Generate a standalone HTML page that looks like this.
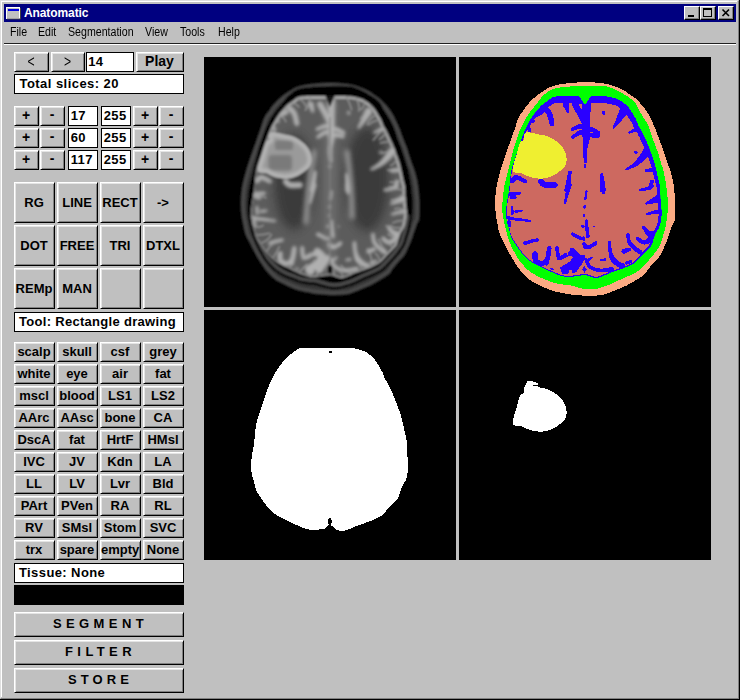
<!DOCTYPE html>
<html><head><meta charset="utf-8"><title>Anatomatic</title>
<style>
html,body{margin:0;padding:0;}
body{width:740px;height:700px;overflow:hidden;background:#c0c0c0;position:relative;font-family:"Liberation Sans",sans-serif;font-size:13px;color:#000;}
.abs{position:absolute;}
#frame{position:absolute;left:0;top:0;width:739px;height:699px;border-right:1px solid #000;border-bottom:1px solid #000;box-sizing:content-box;}
#f1{position:absolute;left:0;top:0;width:739px;height:699px;border-top:1px solid #dfdfdf;border-left:1px solid #dfdfdf;border-right:1px solid #808080;border-bottom:1px solid #808080;box-sizing:border-box;}
#f2{position:absolute;left:1px;top:1px;width:736px;height:696px;border-top:1px solid #fff;border-left:1px solid #fff;box-sizing:border-box;}
#title{position:absolute;left:4px;top:4px;width:732px;height:18px;background:#000080;color:#fff;font-weight:bold;font-size:13px;line-height:18px;}
#title span{position:absolute;left:20px;top:0;font-size:12px;letter-spacing:-0.1px}
.menu{position:absolute;top:25px;font-size:12px;line-height:14px;transform:scaleX(0.885);transform-origin:0 0;}
#sep1{position:absolute;left:4px;top:43px;width:732px;height:1px;background:#202020;}
#sep2{position:absolute;left:4px;top:44px;width:732px;height:1px;background:#fff;}
.btn{position:absolute;box-sizing:border-box;background:#c0c0c0;border-top:1px solid #fff;border-left:1px solid #fff;border-right:1px solid #000;border-bottom:1px solid #000;box-shadow:inset 1px 1px 0 #e4e4e4,inset -1px -1px 0 #808080;padding:1px 0 0 1px;font-weight:bold;text-align:center;white-space:nowrap;overflow:hidden;}
.btn span{position:relative;display:block;left:-1px;}
.box{position:absolute;box-sizing:border-box;background:#fff;border:1px solid #000;font-weight:bold;white-space:nowrap;overflow:hidden;}
.cb{position:absolute;box-sizing:border-box;background:#c0c0c0;border-top:1px solid #fff;border-left:1px solid #fff;border-right:1px solid #000;border-bottom:1px solid #000;}
.cb:after{content:"";position:absolute;right:0;bottom:0;left:0;top:0;border-right:1px solid #808080;border-bottom:1px solid #808080;}
</style></head>
<body>
<div id="frame"></div><div id="f1"></div><div id="f2"></div>
<div id="title"><span>Anatomatic</span></div>

<svg class="abs" style="left:6px;top:5px" width="16" height="16" viewBox="0 0 16 16"><rect x="0.5" y="2.5" width="13" height="11" fill="#c0c0c0" stroke="#fff"/><path d="M1 14H14.5V3" fill="none" stroke="#404040"/><rect x="2" y="4" width="11" height="2" fill="#0000e0"/></svg>
<div class="cb" style="left:684px;top:6px;width:16px;height:14px"><svg class="abs" style="left:0;top:0" width="14" height="12"><rect x="3" y="8" width="6" height="2" fill="#000"/></svg></div>
<div class="cb" style="left:700px;top:6px;width:16px;height:14px"><svg class="abs" style="left:0;top:0" width="14" height="12"><rect x="2.5" y="1.5" width="8" height="8" fill="none" stroke="#000"/><rect x="2" y="1" width="9" height="2" fill="#000"/></svg></div>
<div class="cb" style="left:718px;top:6px;width:16px;height:14px"><svg class="abs" style="left:0;top:0" width="14" height="12"><path d="M3.5 2.5L10 9M10 2.5L3.5 9" stroke="#000" stroke-width="1.6" fill="none"/></svg></div>

<div class="menu" style="left:10.3px">File</div><div class="menu" style="left:38.3px">Edit</div><div class="menu" style="left:67.6px">Segmentation</div><div class="menu" style="left:144.5px">View</div><div class="menu" style="left:179.5px">Tools</div><div class="menu" style="left:217.5px">Help</div>
<div id="sep1"></div><div id="sep2"></div>
<div class="btn" style="left:14px;top:52px;width:35px;height:20px;font-size:17px;line-height:17px;font-weight:normal;"><span style="letter-spacing:0px;top:-1px;transform:scaleX(0.72);">&lt;</span></div>
<div class="btn" style="left:51px;top:52px;width:34px;height:20px;font-size:17px;line-height:17px;font-weight:normal;"><span style="letter-spacing:0px;top:-1px;transform:scaleX(0.72);">&gt;</span></div>
<div class="box" style="left:86px;top:52px;width:48px;height:20px;font-size:13px;line-height:18px;padding-left:1.2px;letter-spacing:0.4px;"><span style="position:relative;top:0px">14</span></div>
<div class="btn" style="left:136px;top:52px;width:48px;height:20px;font-size:14px;line-height:17px;"><span style="letter-spacing:0px;top:-1px;">Play</span></div>
<div class="box" style="left:14px;top:74px;width:170px;height:20px;font-size:13px;line-height:18px;padding-left:4.5px;letter-spacing:0.45px;"><span style="position:relative;top:0px">Total slices: 20</span></div>
<div class="btn" style="left:14px;top:106px;width:25px;height:20px;font-size:14px;line-height:17px;"><span style="letter-spacing:0px;top:-1px;">+</span></div>
<div class="btn" style="left:40px;top:106px;width:25px;height:20px;font-size:14px;line-height:17px;"><span style="letter-spacing:0px;top:-2px;">-</span></div>
<div class="box" style="left:68px;top:106px;width:30px;height:20px;font-size:13px;line-height:18px;padding-left:1.7px;letter-spacing:0.4px;"><span style="position:relative;top:0px">17</span></div>
<div class="box" style="left:101px;top:106px;width:30px;height:20px;font-size:13px;line-height:18px;padding-left:1.7px;letter-spacing:0.4px;"><span style="position:relative;top:0px">255</span></div>
<div class="btn" style="left:133px;top:106px;width:25px;height:20px;font-size:14px;line-height:17px;"><span style="letter-spacing:0px;top:-1px;">+</span></div>
<div class="btn" style="left:159px;top:106px;width:25px;height:20px;font-size:14px;line-height:17px;"><span style="letter-spacing:0px;top:-2px;">-</span></div>
<div class="btn" style="left:14px;top:128px;width:25px;height:20px;font-size:14px;line-height:17px;"><span style="letter-spacing:0px;top:-1px;">+</span></div>
<div class="btn" style="left:40px;top:128px;width:25px;height:20px;font-size:14px;line-height:17px;"><span style="letter-spacing:0px;top:-2px;">-</span></div>
<div class="box" style="left:68px;top:128px;width:30px;height:20px;font-size:13px;line-height:18px;padding-left:1.7px;letter-spacing:0.4px;"><span style="position:relative;top:0px">60</span></div>
<div class="box" style="left:101px;top:128px;width:30px;height:20px;font-size:13px;line-height:18px;padding-left:1.7px;letter-spacing:0.4px;"><span style="position:relative;top:0px">255</span></div>
<div class="btn" style="left:133px;top:128px;width:25px;height:20px;font-size:14px;line-height:17px;"><span style="letter-spacing:0px;top:-1px;">+</span></div>
<div class="btn" style="left:159px;top:128px;width:25px;height:20px;font-size:14px;line-height:17px;"><span style="letter-spacing:0px;top:-2px;">-</span></div>
<div class="btn" style="left:14px;top:150px;width:25px;height:20px;font-size:14px;line-height:17px;"><span style="letter-spacing:0px;top:-1px;">+</span></div>
<div class="btn" style="left:40px;top:150px;width:25px;height:20px;font-size:14px;line-height:17px;"><span style="letter-spacing:0px;top:-2px;">-</span></div>
<div class="box" style="left:68px;top:150px;width:30px;height:20px;font-size:13px;line-height:18px;padding-left:1.7px;letter-spacing:0.4px;"><span style="position:relative;top:0px">117</span></div>
<div class="box" style="left:101px;top:150px;width:30px;height:20px;font-size:13px;line-height:18px;padding-left:1.7px;letter-spacing:0.4px;"><span style="position:relative;top:0px">255</span></div>
<div class="btn" style="left:133px;top:150px;width:25px;height:20px;font-size:14px;line-height:17px;"><span style="letter-spacing:0px;top:-1px;">+</span></div>
<div class="btn" style="left:159px;top:150px;width:25px;height:20px;font-size:14px;line-height:17px;"><span style="letter-spacing:0px;top:-2px;">-</span></div>
<div class="btn" style="left:14px;top:182px;width:41px;height:41px;font-size:13px;line-height:38px;"><span style="letter-spacing:0px;top:0px;">RG</span></div>
<div class="btn" style="left:57px;top:182px;width:41px;height:41px;font-size:13px;line-height:38px;"><span style="letter-spacing:0px;top:0px;">LINE</span></div>
<div class="btn" style="left:100px;top:182px;width:41px;height:41px;font-size:13px;line-height:38px;"><span style="letter-spacing:0px;top:0px;">RECT</span></div>
<div class="btn" style="left:143px;top:182px;width:41px;height:41px;font-size:13px;line-height:38px;"><span style="letter-spacing:0px;top:0px;">-&gt;</span></div>
<div class="btn" style="left:14px;top:225px;width:41px;height:41px;font-size:13px;line-height:38px;"><span style="letter-spacing:0px;top:0px;">DOT</span></div>
<div class="btn" style="left:57px;top:225px;width:41px;height:41px;font-size:13px;line-height:38px;"><span style="letter-spacing:0px;top:0px;">FREE</span></div>
<div class="btn" style="left:100px;top:225px;width:41px;height:41px;font-size:13px;line-height:38px;"><span style="letter-spacing:0px;top:0px;">TRI</span></div>
<div class="btn" style="left:143px;top:225px;width:41px;height:41px;font-size:13px;line-height:38px;"><span style="letter-spacing:0px;top:0px;">DTXL</span></div>
<div class="btn" style="left:14px;top:268px;width:41px;height:41px;font-size:13px;line-height:38px;"><span style="letter-spacing:0px;top:0px;">REMp</span></div>
<div class="btn" style="left:57px;top:268px;width:41px;height:41px;font-size:13px;line-height:38px;"><span style="letter-spacing:0px;top:0px;">MAN</span></div>
<div class="btn" style="left:100px;top:268px;width:41px;height:41px;font-size:13px;line-height:38px;"><span style="letter-spacing:0px;top:0px;"></span></div>
<div class="btn" style="left:143px;top:268px;width:41px;height:41px;font-size:13px;line-height:38px;"><span style="letter-spacing:0px;top:0px;"></span></div>
<div class="box" style="left:14px;top:312px;width:170px;height:20px;font-size:13px;line-height:18px;padding-left:4px;letter-spacing:0.3px;"><span style="position:relative;top:-0.5px">Tool: Rectangle drawing</span></div>
<div class="btn" style="left:14px;top:342px;width:41px;height:20px;font-size:13px;line-height:17px;"><span style="letter-spacing:0px;top:-1px;">scalp</span></div>
<div class="btn" style="left:57px;top:342px;width:41px;height:20px;font-size:13px;line-height:17px;"><span style="letter-spacing:0px;top:-1px;">skull</span></div>
<div class="btn" style="left:100px;top:342px;width:41px;height:20px;font-size:13px;line-height:17px;"><span style="letter-spacing:0px;top:-1px;">csf</span></div>
<div class="btn" style="left:143px;top:342px;width:41px;height:20px;font-size:13px;line-height:17px;"><span style="letter-spacing:0px;top:-1px;">grey</span></div>
<div class="btn" style="left:14px;top:364px;width:41px;height:20px;font-size:13px;line-height:17px;"><span style="letter-spacing:0px;top:-1px;">white</span></div>
<div class="btn" style="left:57px;top:364px;width:41px;height:20px;font-size:13px;line-height:17px;"><span style="letter-spacing:0px;top:-1px;">eye</span></div>
<div class="btn" style="left:100px;top:364px;width:41px;height:20px;font-size:13px;line-height:17px;"><span style="letter-spacing:0px;top:-1px;">air</span></div>
<div class="btn" style="left:143px;top:364px;width:41px;height:20px;font-size:13px;line-height:17px;"><span style="letter-spacing:0px;top:-1px;">fat</span></div>
<div class="btn" style="left:14px;top:386px;width:41px;height:20px;font-size:13px;line-height:17px;"><span style="letter-spacing:0px;top:-1px;">mscl</span></div>
<div class="btn" style="left:57px;top:386px;width:41px;height:20px;font-size:13px;line-height:17px;"><span style="letter-spacing:0px;top:-1px;">blood</span></div>
<div class="btn" style="left:100px;top:386px;width:41px;height:20px;font-size:13px;line-height:17px;"><span style="letter-spacing:0px;top:-1px;">LS1</span></div>
<div class="btn" style="left:143px;top:386px;width:41px;height:20px;font-size:13px;line-height:17px;"><span style="letter-spacing:0px;top:-1px;">LS2</span></div>
<div class="btn" style="left:14px;top:408px;width:41px;height:20px;font-size:13px;line-height:17px;"><span style="letter-spacing:0px;top:-1px;">AArc</span></div>
<div class="btn" style="left:57px;top:408px;width:41px;height:20px;font-size:13px;line-height:17px;"><span style="letter-spacing:0px;top:-1px;">AAsc</span></div>
<div class="btn" style="left:100px;top:408px;width:41px;height:20px;font-size:13px;line-height:17px;"><span style="letter-spacing:0px;top:-1px;">bone</span></div>
<div class="btn" style="left:143px;top:408px;width:41px;height:20px;font-size:13px;line-height:17px;"><span style="letter-spacing:0px;top:-1px;">CA</span></div>
<div class="btn" style="left:14px;top:430px;width:41px;height:20px;font-size:13px;line-height:17px;"><span style="letter-spacing:0px;top:-1px;">DscA</span></div>
<div class="btn" style="left:57px;top:430px;width:41px;height:20px;font-size:13px;line-height:17px;"><span style="letter-spacing:0px;top:-1px;">fat</span></div>
<div class="btn" style="left:100px;top:430px;width:41px;height:20px;font-size:13px;line-height:17px;"><span style="letter-spacing:0px;top:-1px;">HrtF</span></div>
<div class="btn" style="left:143px;top:430px;width:41px;height:20px;font-size:13px;line-height:17px;"><span style="letter-spacing:0px;top:-1px;">HMsl</span></div>
<div class="btn" style="left:14px;top:452px;width:41px;height:20px;font-size:13px;line-height:17px;"><span style="letter-spacing:0px;top:-1px;">IVC</span></div>
<div class="btn" style="left:57px;top:452px;width:41px;height:20px;font-size:13px;line-height:17px;"><span style="letter-spacing:0px;top:-1px;">JV</span></div>
<div class="btn" style="left:100px;top:452px;width:41px;height:20px;font-size:13px;line-height:17px;"><span style="letter-spacing:0px;top:-1px;">Kdn</span></div>
<div class="btn" style="left:143px;top:452px;width:41px;height:20px;font-size:13px;line-height:17px;"><span style="letter-spacing:0px;top:-1px;">LA</span></div>
<div class="btn" style="left:14px;top:474px;width:41px;height:20px;font-size:13px;line-height:17px;"><span style="letter-spacing:0px;top:-1px;">LL</span></div>
<div class="btn" style="left:57px;top:474px;width:41px;height:20px;font-size:13px;line-height:17px;"><span style="letter-spacing:0px;top:-1px;">LV</span></div>
<div class="btn" style="left:100px;top:474px;width:41px;height:20px;font-size:13px;line-height:17px;"><span style="letter-spacing:0px;top:-1px;">Lvr</span></div>
<div class="btn" style="left:143px;top:474px;width:41px;height:20px;font-size:13px;line-height:17px;"><span style="letter-spacing:0px;top:-1px;">Bld</span></div>
<div class="btn" style="left:14px;top:496px;width:41px;height:20px;font-size:13px;line-height:17px;"><span style="letter-spacing:0px;top:-1px;">PArt</span></div>
<div class="btn" style="left:57px;top:496px;width:41px;height:20px;font-size:13px;line-height:17px;"><span style="letter-spacing:0px;top:-1px;">PVen</span></div>
<div class="btn" style="left:100px;top:496px;width:41px;height:20px;font-size:13px;line-height:17px;"><span style="letter-spacing:0px;top:-1px;">RA</span></div>
<div class="btn" style="left:143px;top:496px;width:41px;height:20px;font-size:13px;line-height:17px;"><span style="letter-spacing:0px;top:-1px;">RL</span></div>
<div class="btn" style="left:14px;top:518px;width:41px;height:20px;font-size:13px;line-height:17px;"><span style="letter-spacing:0px;top:-1px;">RV</span></div>
<div class="btn" style="left:57px;top:518px;width:41px;height:20px;font-size:13px;line-height:17px;"><span style="letter-spacing:0px;top:-1px;">SMsl</span></div>
<div class="btn" style="left:100px;top:518px;width:41px;height:20px;font-size:13px;line-height:17px;"><span style="letter-spacing:0px;top:-1px;">Stom</span></div>
<div class="btn" style="left:143px;top:518px;width:41px;height:20px;font-size:13px;line-height:17px;"><span style="letter-spacing:0px;top:-1px;">SVC</span></div>
<div class="btn" style="left:14px;top:540px;width:41px;height:20px;font-size:13px;line-height:17px;"><span style="letter-spacing:0px;top:-1px;">trx</span></div>
<div class="btn" style="left:57px;top:540px;width:41px;height:20px;font-size:13px;line-height:17px;"><span style="letter-spacing:0px;top:-1px;">spare</span></div>
<div class="btn" style="left:100px;top:540px;width:41px;height:20px;font-size:13px;line-height:17px;"><span style="letter-spacing:0px;top:-1px;">empty</span></div>
<div class="btn" style="left:143px;top:540px;width:41px;height:20px;font-size:13px;line-height:17px;"><span style="letter-spacing:0px;top:-1px;">None</span></div>
<div class="box" style="left:14px;top:563px;width:170px;height:20px;font-size:13px;line-height:18px;padding-left:4px;letter-spacing:0.4px;"><span style="position:relative;top:-0.3px">Tissue: None</span></div>
<div class="abs" style="left:14px;top:585px;width:170px;height:20px;background:#000"></div>
<div class="btn" style="left:14px;top:612px;width:170px;height:25px;font-size:13px;line-height:22px;text-indent:4px;"><span style="letter-spacing:4.4px;top:-1px;">SEGMENT</span></div>
<div class="btn" style="left:14px;top:640px;width:170px;height:25px;font-size:13px;line-height:22px;text-indent:4px;"><span style="letter-spacing:4.4px;top:-1px;">FILTER</span></div>
<div class="btn" style="left:14px;top:668px;width:170px;height:25px;font-size:13px;line-height:22px;text-indent:4px;"><span style="letter-spacing:4.1px;top:-1px;">STORE</span></div>

<svg class="abs" style="left:204px;top:57px" width="507" height="503" viewBox="0 0 507 503"><defs><path id="po" d="M126.0 25.1L129.4 25.1L132.7 25.3L135.7 25.5L138.5 25.7L141.0 26.0L143.1 26.2L144.9 26.5L146.5 26.7L148.0 27.0L149.6 27.4L151.3 27.9L153.1 28.4L154.8 29.1L156.5 29.7L158.1 30.3L159.6 30.9L161.0 31.5L162.4 32.1L163.7 32.7L165.0 33.4L166.2 34.1L167.4 34.9L168.5 35.8L169.6 36.6L170.7 37.4L171.9 38.2L173.0 39.0L174.2 39.8L175.3 40.6L176.4 41.4L177.4 42.3L178.3 43.2L179.2 44.1L180.1 45.0L181.0 46.0L181.9 47.0L182.8 48.0L183.6 49.0L184.5 50.0L185.3 51.1L186.1 52.2L187.0 53.3L187.8 54.5L188.5 55.7L189.3 56.9L190.0 58.2L190.7 59.5L191.4 60.9L192.0 62.3L192.7 63.7L193.4 65.1L194.0 66.5L194.7 67.9L195.4 69.4L196.1 71.1L196.8 73.0L197.6 75.2L198.4 77.4L199.2 79.6L199.9 81.6L200.6 83.4L201.3 85.1L202.0 86.8L202.7 88.4L203.3 90.1L203.9 91.8L204.5 93.5L205.0 95.3L205.5 97.0L206.1 98.7L206.7 100.5L207.3 102.3L207.9 104.1L208.5 105.8L209.0 107.3L209.5 108.6L209.9 109.6L210.3 110.7L210.7 111.7L211.1 113.0L211.6 114.5L212.0 116.2L212.5 118.0L213.0 119.8L213.4 121.6L213.8 123.3L214.1 125.0L214.4 126.7L214.7 128.4L214.9 130.1L215.1 131.8L215.3 133.5L215.4 135.3L215.6 137.0L215.7 138.7L215.8 140.3L216.0 141.9L216.1 143.4L216.2 145.2L216.3 147.3L216.3 149.9L216.3 153.1L216.2 156.3L216.1 159.3L215.9 161.7L215.6 163.4L215.1 164.5L214.7 165.4L214.1 166.3L213.6 167.4L213.0 168.9L212.5 170.5L211.8 172.2L211.3 173.8L210.7 175.4L210.2 176.9L209.7 178.3L209.3 179.7L208.9 181.0L208.4 182.3L208.0 183.4L207.6 184.4L207.2 185.4L206.7 186.6L206.1 188.0L205.3 189.9L204.3 192.1L203.2 194.4L202.1 196.7L201.0 198.6L199.9 200.1L198.8 201.4L197.6 202.6L196.4 203.7L195.3 204.9L194.1 206.2L192.9 207.6L191.8 209.0L190.6 210.4L189.6 211.7L188.8 212.9L188.1 214.0L187.5 215.1L186.7 216.2L185.6 217.4L184.0 218.6L182.1 220.0L180.0 221.3L177.9 222.5L176.0 223.7L174.3 224.7L172.7 225.7L171.2 226.6L169.6 227.4L168.0 228.3L166.2 229.1L164.4 230.0L162.6 230.8L160.7 231.5L158.9 232.3L157.1 233.0L155.4 233.8L153.6 234.4L151.9 235.1L150.3 235.7L148.9 236.3L147.6 236.8L146.3 237.2L144.8 237.7L142.9 238.0L140.4 238.3L137.6 238.5L134.5 238.6L131.2 238.7L128.0 238.7L124.6 238.6L120.8 238.3L117.1 238.0L113.7 237.7L111.0 237.4L109.2 237.2L108.0 237.0L107.2 236.8L106.4 236.6L105.3 236.3L103.8 236.0L102.1 235.7L100.3 235.4L98.5 235.0L96.7 234.6L95.0 234.1L93.3 233.6L91.5 233.0L89.8 232.4L88.1 231.7L86.4 231.0L84.7 230.2L83.0 229.4L81.3 228.6L79.6 227.7L77.9 226.9L76.2 226.1L74.5 225.2L72.7 224.3L71.0 223.1L69.2 221.7L67.4 220.1L65.6 218.3L63.9 216.5L62.2 214.6L60.6 212.6L59.1 210.4L57.6 208.2L56.3 206.2L55.1 204.4L54.2 203.0L53.5 201.8L52.9 200.8L52.3 199.8L51.7 198.7L51.0 197.5L50.3 196.2L49.7 195.0L49.0 193.7L48.3 192.4L47.6 191.1L47.0 189.8L46.3 188.4L45.6 187.0L44.9 185.6L44.1 184.1L43.3 182.6L42.4 181.0L41.6 179.3L40.9 177.6L40.3 175.9L39.9 174.1L39.4 172.2L39.0 170.2L38.6 167.9L38.1 165.3L37.6 162.6L37.1 159.6L36.7 156.4L36.4 153.0L36.3 149.3L36.2 145.4L36.3 141.2L36.6 137.1L37.0 133.0L37.6 129.0L38.5 125.0L39.4 121.0L40.5 117.0L41.6 113.0L42.8 109.0L44.1 105.0L45.5 101.0L46.9 97.0L48.3 93.0L49.7 88.9L51.2 84.7L52.7 80.5L54.1 76.5L55.4 73.0L56.4 69.9L57.3 67.1L58.1 64.5L58.9 62.2L59.8 60.1L60.8 58.3L61.9 56.7L62.9 55.4L63.9 54.1L64.8 53.0L65.4 52.0L65.8 51.3L66.2 50.6L66.7 49.8L67.6 48.7L68.9 47.2L70.5 45.5L72.4 43.6L74.2 41.7L76.0 40.1L77.7 38.7L79.4 37.4L81.2 36.1L82.9 35.0L84.6 33.9L86.2 32.8L87.8 31.9L89.4 30.9L91.1 30.1L93.1 29.3L95.3 28.6L97.6 28.0L100.1 27.5L102.9 27.0L106.0 26.6L109.6 26.2L113.7 25.8L118.0 25.5L122.2 25.2Z"/><path id="pm" d="M126.0 28.9L129.4 28.8L132.7 28.8L135.7 28.8L138.5 28.8L141.0 28.9L143.1 29.0L144.9 29.2L146.5 29.3L148.0 29.6L149.6 30.0L151.3 30.5L153.1 31.2L154.8 31.9L156.5 32.6L158.1 33.4L159.6 34.2L161.0 35.0L162.4 35.8L163.7 36.6L165.0 37.4L166.2 38.1L167.4 38.8L168.5 39.4L169.6 40.1L170.7 40.9L171.9 41.8L173.1 42.8L174.3 43.8L175.4 44.9L176.4 46.0L177.2 47.2L177.8 48.4L178.4 49.7L178.9 51.0L179.6 52.3L180.3 53.6L181.1 55.0L182.0 56.4L182.8 57.8L183.6 59.1L184.4 60.4L185.3 61.7L186.1 62.9L186.9 64.1L187.6 65.4L188.2 66.6L188.8 67.7L189.3 68.9L189.8 70.2L190.4 71.7L191.0 73.5L191.6 75.5L192.3 77.6L192.9 79.7L193.6 81.6L194.3 83.4L195.0 85.1L195.7 86.8L196.3 88.4L197.0 90.1L197.6 91.8L198.2 93.6L198.8 95.3L199.4 97.1L199.9 98.7L200.4 100.3L200.8 101.8L201.3 103.2L201.7 104.7L202.1 106.1L202.5 107.5L203.0 108.8L203.5 110.1L203.9 111.5L204.3 113.0L204.7 114.6L205.0 116.3L205.4 118.1L205.7 119.9L206.0 121.6L206.3 123.3L206.6 125.0L206.9 126.7L207.2 128.4L207.4 130.1L207.6 131.8L207.8 133.5L208.0 135.3L208.1 137.0L208.3 138.7L208.5 140.4L208.6 142.1L208.8 143.8L208.9 145.5L208.9 147.3L208.9 149.1L208.8 151.0L208.7 152.9L208.6 154.8L208.4 156.6L208.2 158.3L208.0 160.1L207.8 161.7L207.6 163.4L207.3 165.1L207.0 166.8L206.7 168.6L206.4 170.3L206.0 172.1L205.6 173.7L205.2 175.3L204.7 176.8L204.2 178.2L203.8 179.7L203.3 181.1L202.9 182.6L202.5 184.0L202.1 185.5L201.6 186.9L201.0 188.3L200.2 189.7L199.3 191.1L198.3 192.5L197.4 193.8L196.4 195.1L195.5 196.3L194.7 197.4L193.8 198.6L192.9 199.7L191.9 200.9L190.7 202.2L189.5 203.6L188.2 205.0L186.9 206.4L185.6 207.7L184.4 208.9L183.3 210.2L182.1 211.3L181.0 212.4L179.9 213.4L178.8 214.2L177.8 214.9L176.7 215.5L175.6 216.1L174.5 216.7L173.3 217.3L172.1 217.9L170.8 218.4L169.5 219.0L168.0 219.7L166.3 220.4L164.5 221.2L162.6 222.1L160.7 222.9L158.9 223.7L157.1 224.5L155.4 225.4L153.7 226.2L152.0 227.0L150.3 227.7L148.5 228.4L146.7 229.0L144.9 229.6L143.2 230.1L141.7 230.6L140.4 231.0L139.4 231.3L138.5 231.6L137.4 231.8L136.0 232.0L134.4 232.2L132.5 232.3L130.6 232.4L128.4 232.4L126.0 232.1L123.2 231.5L119.9 230.7L116.6 229.7L113.5 228.8L111.0 228.2L109.3 227.9L108.2 227.8L107.4 227.8L106.5 227.8L105.3 227.7L103.6 227.5L101.6 227.2L99.5 226.8L97.5 226.4L95.6 226.0L94.0 225.5L92.5 225.0L91.1 224.4L89.6 223.7L88.1 223.1L86.5 222.5L84.8 221.9L83.1 221.2L81.3 220.5L79.6 219.7L77.8 218.8L76.0 217.8L74.2 216.7L72.5 215.6L71.0 214.6L69.7 213.6L68.5 212.6L67.5 211.6L66.5 210.6L65.5 209.6L64.6 208.6L63.7 207.7L62.8 206.7L62.1 205.8L61.4 205.0L60.9 204.3L60.4 203.7L60.1 203.2L59.6 202.5L59.1 201.6L58.4 200.4L57.6 199.1L56.7 197.6L55.9 196.1L55.1 194.7L54.4 193.4L53.7 192.0L53.0 190.7L52.3 189.3L51.7 187.9L51.1 186.4L50.5 184.8L50.0 183.2L49.4 181.5L48.9 179.9L48.4 178.3L47.9 176.6L47.4 175.0L47.0 173.4L46.6 171.9L46.3 170.5L46.0 169.3L45.7 168.1L45.4 166.7L45.1 165.0L44.7 163.1L44.2 161.0L43.8 158.6L43.5 156.0L43.3 153.0L43.3 149.5L43.5 145.6L43.8 141.4L44.2 137.1L44.7 133.0L45.4 129.0L46.3 125.0L47.3 121.0L48.3 117.0L49.3 113.0L50.2 109.0L51.2 105.0L52.2 101.0L53.2 97.0L54.3 93.0L55.5 88.9L56.9 84.7L58.3 80.5L59.7 76.6L61.1 73.0L62.5 69.8L63.9 66.9L65.4 64.2L66.7 61.8L68.0 59.6L69.1 57.8L70.1 56.3L71.0 55.0L72.0 53.7L73.0 52.4L74.2 50.9L75.4 49.5L76.6 48.0L77.8 46.6L78.9 45.3L79.8 44.1L80.6 42.9L81.3 41.8L82.1 40.8L82.9 39.8L83.8 38.9L84.8 38.0L85.9 37.2L86.9 36.4L88.0 35.6L89.0 34.8L89.9 34.1L90.9 33.4L92.1 32.7L93.7 32.1L95.6 31.6L97.8 31.1L100.2 30.6L102.9 30.2L106.0 29.9L109.6 29.6L113.7 29.4L118.0 29.2L122.2 29.0Z"/><path id="pi" d="M126.0 39.1L129.4 39.1L132.7 39.1L135.7 39.1L138.5 39.1L141.0 39.1L143.1 39.2L144.9 39.2L146.5 39.3L148.0 39.5L149.6 39.7L151.3 40.0L153.1 40.4L154.9 40.9L156.6 41.4L158.1 42.0L159.4 42.6L160.6 43.2L161.7 43.9L162.8 44.6L163.9 45.4L165.1 46.3L166.2 47.2L167.4 48.3L168.5 49.4L169.6 50.6L170.6 52.0L171.7 53.5L172.7 55.1L173.6 56.6L174.4 58.0L175.1 59.2L175.7 60.2L176.3 61.1L176.8 62.1L177.3 63.1L177.8 64.2L178.3 65.5L178.7 66.7L179.1 67.8L179.6 68.9L180.1 69.8L180.5 70.5L181.0 71.2L181.5 72.0L182.1 73.0L182.7 74.3L183.4 75.7L184.2 77.3L184.9 78.9L185.6 80.4L186.3 81.9L187.0 83.4L187.7 84.9L188.4 86.4L189.0 87.9L189.6 89.5L190.2 91.1L190.8 92.7L191.3 94.3L191.9 95.9L192.5 97.4L193.1 98.8L193.6 100.3L194.2 101.8L194.7 103.3L195.2 104.9L195.7 106.6L196.1 108.3L196.6 110.1L197.0 111.9L197.4 113.8L197.9 115.8L198.3 117.8L198.7 119.7L199.1 121.6L199.5 123.4L200.0 125.1L200.4 126.8L200.8 128.4L201.1 130.1L201.2 131.8L201.3 133.5L201.3 135.3L201.3 137.0L201.3 138.7L201.4 140.4L201.5 142.1L201.7 143.8L201.9 145.5L202.0 147.3L202.2 149.1L202.4 151.0L202.5 152.9L202.7 154.8L202.7 156.6L202.6 158.4L202.4 160.2L202.2 161.9L201.9 163.6L201.6 165.1L201.3 166.4L201.0 167.6L200.7 168.7L200.4 169.8L199.9 170.9L199.3 172.0L198.6 173.1L197.8 174.3L197.1 175.4L196.5 176.5L196.0 177.6L195.6 178.8L195.2 180.0L194.9 181.1L194.5 182.3L194.2 183.5L193.9 184.6L193.6 185.8L193.2 187.0L192.6 188.2L191.7 189.5L190.5 190.8L189.2 192.1L187.9 193.4L186.7 194.6L185.6 195.7L184.6 196.8L183.6 197.8L182.6 198.8L181.6 199.9L180.5 201.0L179.4 202.2L178.3 203.4L177.1 204.6L175.9 205.6L174.6 206.5L173.2 207.3L171.8 208.1L170.4 208.8L168.8 209.5L167.2 210.2L165.4 210.9L163.7 211.6L161.8 212.2L160.0 212.9L158.1 213.6L156.1 214.2L154.1 214.9L152.2 215.6L150.3 216.3L148.5 217.1L146.6 217.9L144.9 218.7L143.2 219.4L141.7 220.0L140.4 220.4L139.4 220.7L138.5 220.9L137.4 221.0L136.0 220.9L134.4 220.5L132.5 219.9L130.6 219.2L128.4 218.6L126.0 218.3L123.2 218.4L119.9 218.8L116.6 219.3L113.5 219.7L111.0 220.0L109.3 220.1L108.2 220.1L107.3 220.1L106.5 220.0L105.3 219.7L103.8 219.3L102.1 218.8L100.3 218.2L98.5 217.6L96.7 216.9L95.0 216.2L93.3 215.4L91.5 214.6L89.8 213.7L88.1 212.9L86.4 212.1L84.7 211.3L83.0 210.5L81.3 209.7L79.6 208.9L77.9 208.0L76.1 207.1L74.4 206.2L72.8 205.2L71.4 204.3L70.2 203.4L69.3 202.6L68.4 201.8L67.6 200.9L66.6 199.9L65.5 198.8L64.3 197.5L63.1 196.3L62.0 194.9L60.9 193.6L59.9 192.3L59.0 190.9L58.1 189.5L57.2 188.1L56.3 186.7L55.4 185.4L54.4 184.0L53.5 182.7L52.7 181.3L52.0 179.9L51.5 178.4L51.0 176.7L50.7 175.1L50.4 173.4L50.0 171.9L49.6 170.5L49.2 169.3L48.7 168.1L48.3 166.7L48.0 165.0L47.7 163.1L47.3 161.0L47.1 158.6L46.9 156.0L47.0 153.0L47.4 149.5L48.0 145.6L48.7 141.4L49.5 137.1L50.1 133.0L50.5 129.0L50.9 125.0L51.2 121.0L51.7 117.0L52.4 113.0L53.4 109.0L54.7 105.0L56.1 101.0L57.5 97.0L58.9 93.0L60.3 88.9L61.7 84.6L63.2 80.4L64.6 76.5L66.0 73.0L67.4 70.0L68.7 67.3L70.1 64.9L71.4 62.7L72.6 60.7L73.7 59.0L74.7 57.5L75.7 56.3L76.7 55.1L77.7 53.9L78.7 52.7L79.7 51.4L80.7 50.3L81.8 49.2L82.9 48.1L84.1 47.1L85.3 46.2L86.6 45.3L87.9 44.4L89.1 43.6L90.2 42.7L91.2 41.9L92.2 41.1L93.4 40.4L94.9 39.8L96.6 39.5L98.5 39.3L100.7 39.2L103.1 39.1L106.0 39.1L109.5 39.1L113.6 39.0L117.9 39.1L122.2 39.1Z"/><path id="pl" d="M68.1 75.1L70.3 75.3L73.1 75.9L76.1 76.6L78.9 77.3L81.4 77.8L84.0 78.2L86.5 78.7L88.9 79.4L91.2 80.4L93.4 81.7L95.5 83.0L97.4 84.4L99.3 85.9L101.0 87.5L102.5 89.2L103.9 90.9L104.9 92.6L105.8 94.4L106.5 96.2L107.0 98.0L107.4 99.8L107.6 101.7L107.6 103.5L107.4 105.1L107.0 106.7L106.4 108.2L105.6 109.5L104.6 110.9L103.4 112.1L101.9 113.3L100.4 114.5L98.9 115.6L97.4 116.6L95.8 117.6L94.2 118.5L92.4 119.3L90.4 120.0L88.2 120.7L85.9 121.2L83.9 121.6L82.0 121.7L80.2 121.6L78.5 121.4L76.7 121.1L74.8 120.8L72.9 120.4L71.0 119.9L69.1 119.3L67.4 118.5L65.8 117.7L64.2 116.8L62.4 116.1L60.4 115.8L58.1 115.8L56.1 115.6L54.6 115.1L53.8 114.2L53.6 113.0L53.7 111.6L53.9 110.1L54.2 108.5L54.8 106.7L55.4 104.8L56.0 103.0L56.6 101.2L57.1 99.3L57.7 97.5L58.1 95.9L58.5 94.3L58.9 92.9L59.2 91.5L59.6 90.1L60.0 88.8L60.5 87.5L61.1 86.2L61.7 85.1L62.6 84.3L63.7 83.6L64.7 83.0L65.3 82.3L65.3 81.4L64.9 80.5L64.5 79.6L64.6 78.7L65.0 77.7L65.6 76.6L66.6 75.6Z"/><path id="pk" d="M126.0 37.9L129.6 37.9L133.0 37.9L136.2 37.9L139.3 37.9L141.9 37.9L144.2 38.0L146.1 38.0L147.8 38.1L149.4 38.3L151.1 38.5L152.9 38.9L154.7 39.3L156.4 39.8L158.1 40.4L159.6 41.0L160.9 41.6L162.1 42.2L163.2 42.9L164.3 43.7L165.4 44.6L166.6 45.5L167.7 46.5L168.9 47.6L170.0 48.8L171.1 50.1L172.1 51.5L173.2 53.1L174.2 54.8L175.1 56.5L175.9 57.9L176.6 59.1L177.2 60.1L177.8 61.1L178.3 62.1L178.8 63.1L179.3 64.2L179.8 65.5L180.2 66.7L180.6 67.8L181.1 68.9L181.6 69.8L182.0 70.5L182.5 71.2L183.0 72.0L183.6 73.0L184.2 74.3L184.9 75.7L185.7 77.3L186.4 78.9L187.1 80.4L187.8 81.9L188.5 83.4L189.2 84.9L189.9 86.4L190.5 87.9L191.1 89.5L191.7 91.1L192.3 92.7L192.8 94.3L193.4 95.9L194.0 97.4L194.6 98.8L195.1 100.3L195.7 101.8L196.2 103.3L196.7 104.9L197.2 106.6L197.6 108.3L198.1 110.1L198.5 111.9L198.9 113.8L199.4 115.8L199.8 117.8L200.2 119.7L200.6 121.6L201.0 123.4L201.5 125.1L201.9 126.8L202.3 128.4L202.6 130.1L202.7 131.8L202.8 133.5L202.8 135.3L202.8 137.0L202.8 138.7L202.9 140.4L203.0 142.1L203.2 143.8L203.4 145.5L203.5 147.3L203.7 149.1L203.9 151.0L204.0 152.9L204.2 154.8L204.2 156.6L204.1 158.4L203.9 160.2L203.7 161.9L203.4 163.6L203.1 165.1L202.8 166.4L202.5 167.6L202.2 168.7L201.9 169.8L201.4 170.9L200.8 172.0L200.1 173.1L199.3 174.3L198.6 175.4L198.0 176.5L197.5 177.6L197.1 178.8L196.7 180.0L196.4 181.1L196.0 182.3L195.7 183.5L195.4 184.6L195.1 185.8L194.7 187.0L194.1 188.2L193.2 189.5L192.0 190.8L190.7 192.1L189.4 193.4L188.2 194.6L187.1 195.7L186.1 196.8L185.1 197.8L184.1 198.8L183.1 199.9L182.0 201.0L180.9 202.2L179.8 203.4L178.6 204.6L177.4 205.6L176.1 206.5L174.7 207.3L173.3 208.1L171.9 208.8L170.3 209.5L168.7 210.2L166.9 210.9L165.2 211.6L163.3 212.2L161.5 212.9L159.6 213.6L157.7 214.2L155.7 214.9L153.7 215.6L151.8 216.3L149.9 217.1L148.0 217.9L146.1 218.7L144.3 219.4L142.7 220.0L141.3 220.4L140.3 220.7L139.2 220.9L138.1 221.0L136.6 220.9L134.9 220.5L132.9 219.9L130.8 219.2L128.5 218.6L126.0 218.3L123.1 218.4L119.9 218.8L116.5 219.3L113.5 219.7L111.0 220.0L109.3 220.1L108.2 220.1L107.3 220.1L106.5 220.0L105.3 219.7L103.8 219.3L102.1 218.8L100.3 218.2L98.5 217.6L96.7 216.9L95.0 216.2L93.3 215.4L91.5 214.6L89.8 213.7L88.1 212.9L86.4 212.1L84.7 211.3L83.0 210.5L81.3 209.7L79.6 208.9L77.9 208.0L76.1 207.1L74.4 206.2L72.8 205.2L71.4 204.3L70.2 203.4L69.3 202.6L68.4 201.8L67.6 200.9L66.6 199.9L65.5 198.8L64.3 197.5L63.1 196.3L62.0 194.9L60.9 193.6L59.9 192.3L59.0 190.9L58.1 189.5L57.2 188.1L56.3 186.7L55.4 185.4L54.4 184.0L53.5 182.7L52.7 181.3L52.0 179.9L51.5 178.4L51.0 176.7L50.7 175.1L50.4 173.4L50.0 171.9L49.6 170.5L49.2 169.3L48.7 168.1L48.3 166.7L48.0 165.0L47.7 163.1L47.3 161.0L47.1 158.6L46.9 156.0L47.0 153.0L47.4 149.5L48.0 145.6L48.7 141.4L49.5 137.1L50.1 133.0L50.5 129.0L50.9 125.0L51.2 121.0L51.7 117.0L52.4 113.0L53.4 109.0L54.7 105.0L56.1 101.0L57.5 97.0L58.9 93.0L60.3 88.9L61.7 84.6L63.2 80.4L64.6 76.5L66.0 73.0L67.4 70.0L68.7 67.3L70.1 64.9L71.4 62.7L72.6 60.7L73.7 58.9L74.7 57.4L75.7 56.1L76.7 54.8L77.7 53.6L78.7 52.2L79.7 51.0L80.7 49.7L81.8 48.5L82.9 47.4L84.1 46.4L85.3 45.4L86.6 44.4L87.9 43.5L89.1 42.7L90.2 41.8L91.2 40.8L92.2 40.0L93.4 39.2L94.9 38.6L96.6 38.3L98.5 38.1L100.7 38.0L103.1 38.0L106.0 37.9L109.5 37.9L113.6 37.9L117.9 37.9L122.1 37.9Z"/><path id="pt" d="M126.0 46.7L128.9 46.6L131.6 46.5L134.2 46.4L136.6 46.3L138.9 46.3L140.9 46.2L142.6 46.2L144.0 46.2L145.3 46.2L146.3 46.3L147.3 46.3L148.4 46.5L149.7 46.6L151.0 46.9L152.3 47.2L153.5 47.5L154.7 47.8L155.7 48.1L156.5 48.4L157.2 48.7L157.9 49.0L158.6 49.4L159.3 49.9L160.1 50.4L161.0 51.0L161.9 51.6L162.7 52.3L163.5 53.0L164.3 53.6L165.0 54.4L165.8 55.2L166.5 56.2L167.3 57.4L168.1 58.6L168.9 59.8L169.7 60.9L170.3 61.8L170.9 62.6L171.3 63.3L171.7 64.0L172.1 64.6L172.5 65.3L172.9 66.1L173.3 66.9L173.7 67.9L174.1 68.9L174.6 70.0L175.1 71.1L175.7 72.0L176.2 72.9L176.7 73.5L177.1 74.0L177.5 74.6L177.9 75.3L178.4 76.2L178.9 77.3L179.5 78.5L180.2 79.8L180.8 81.1L181.4 82.4L182.0 83.6L182.6 84.8L183.2 86.0L183.8 87.2L184.3 88.4L184.9 89.6L185.4 90.8L185.9 92.1L186.4 93.4L186.9 94.7L187.4 96.1L187.9 97.4L188.4 98.7L188.9 99.9L189.4 101.1L189.9 102.2L190.3 103.4L190.8 104.6L191.2 105.8L191.6 107.1L192.0 108.5L192.4 109.9L192.8 111.3L193.2 112.8L193.6 114.3L193.9 115.9L194.3 117.6L194.7 119.2L195.1 120.8L195.5 122.4L195.9 124.0L196.3 125.4L196.7 126.8L197.0 128.1L197.3 129.3L197.6 130.5L197.7 131.8L197.8 133.1L197.8 134.4L197.8 135.8L197.8 137.3L197.9 138.8L198.0 140.3L198.2 141.8L198.3 143.2L198.5 144.7L198.6 146.1L198.8 147.6L199.0 149.1L199.2 150.7L199.3 152.2L199.5 153.7L199.6 155.2L199.6 156.5L199.6 157.9L199.5 159.3L199.4 160.7L199.2 162.0L199.0 163.3L198.8 164.5L198.6 165.6L198.4 166.6L198.2 167.4L197.9 168.2L197.7 168.9L197.4 169.7L197.0 170.5L196.5 171.3L196.0 172.2L195.4 173.2L194.7 174.3L194.2 175.4L193.7 176.5L193.4 177.6L193.1 178.6L192.8 179.6L192.5 180.6L192.2 181.7L192.0 182.7L191.8 183.7L191.6 184.6L191.4 185.4L191.1 186.2L190.7 187.0L190.1 187.9L189.3 188.9L188.4 190.0L187.3 191.1L186.3 192.2L185.3 193.3L184.5 194.2L183.6 195.2L182.8 196.0L182.0 196.9L181.2 197.8L180.4 198.7L179.5 199.7L178.6 200.7L177.8 201.8L176.9 202.7L176.0 203.6L175.0 204.5L174.0 205.2L173.0 205.9L171.9 206.5L170.8 207.1L169.5 207.7L168.3 208.3L166.9 208.9L165.6 209.5L164.1 210.0L162.6 210.6L161.1 211.1L159.6 211.7L158.0 212.3L156.4 212.8L154.7 213.4L153.1 214.0L151.4 214.5L149.8 215.1L148.3 215.8L146.7 216.5L145.2 217.2L143.8 217.8L142.5 218.4L141.3 218.8L140.3 219.2L139.4 219.5L138.7 219.6L138.0 219.7L137.2 219.8L136.2 219.7L134.9 219.4L133.5 219.0L131.9 218.4L130.2 217.8L128.2 217.3L126.0 217.1L123.6 217.2L120.9 217.5L118.1 217.9L115.3 218.3L112.9 218.7L110.9 218.9L109.5 219.0L108.5 219.1L107.8 219.1L107.2 219.0L106.5 218.9L105.5 218.7L104.3 218.4L102.9 218.0L101.5 217.6L100.0 217.1L98.5 216.5L97.1 216.0L95.7 215.4L94.2 214.8L92.8 214.1L91.4 213.4L89.9 212.7L88.5 212.1L87.1 211.4L85.6 210.8L84.2 210.1L82.8 209.5L81.4 208.8L80.0 208.1L78.6 207.4L77.1 206.7L75.7 205.9L74.3 205.1L73.0 204.4L71.9 203.6L70.9 202.9L70.1 202.3L69.4 201.6L68.7 201.0L68.0 200.2L67.1 199.4L66.2 198.4L65.3 197.5L64.3 196.4L63.3 195.3L62.3 194.3L61.5 193.2L60.6 192.1L59.8 190.9L59.1 189.8L58.4 188.6L57.6 187.5L56.9 186.3L56.1 185.2L55.3 184.1L54.6 183.0L53.8 181.9L53.2 180.8L52.6 179.6L52.2 178.4L51.8 177.1L51.5 175.8L51.2 174.4L51.0 173.0L50.6 171.7L50.3 170.6L49.9 169.5L49.6 168.5L49.2 167.5L48.9 166.3L48.6 164.9L48.4 163.3L48.1 161.6L47.8 159.8L47.6 157.7L47.6 155.5L47.6 153.0L47.9 150.2L48.4 147.0L49.0 143.6L49.6 140.1L50.2 136.5L50.7 133.1L51.1 129.7L51.4 126.4L51.7 123.1L52.1 119.8L52.6 116.5L53.3 113.2L54.2 109.9L55.2 106.6L56.4 103.3L57.6 100.0L58.9 96.7L60.1 93.4L61.3 90.0L62.6 86.5L63.9 83.0L65.1 79.6L66.4 76.5L67.8 73.8L69.2 71.4L70.5 69.3L71.8 67.3L73.0 65.6L74.2 63.9L75.4 62.5L76.4 61.1L77.3 60.1L78.2 59.1L79.0 58.3L79.9 57.4L80.8 56.5L81.8 55.5L82.7 54.6L83.5 53.8L84.4 53.0L85.2 52.3L86.1 51.7L87.0 51.1L87.9 50.5L89.0 49.9L90.0 49.4L91.2 48.8L92.4 48.1L93.5 47.4L94.5 46.7L95.2 46.2L95.6 46.0L96.0 45.9L96.6 45.8L97.4 45.8L98.5 45.8L99.9 45.9L101.6 46.1L103.7 46.2L106.1 46.2L108.9 46.2L112.2 46.3L115.7 46.4L119.3 46.5L122.8 46.6Z"/><path id="ptm" d="M126.0 42.0L128.9 42.0L131.6 42.0L134.2 41.9L136.7 41.9L138.9 41.9L140.9 42.0L142.7 42.0L144.2 42.1L145.5 42.1L146.7 42.2L147.9 42.3L149.1 42.5L150.5 42.8L151.9 43.1L153.3 43.5L154.6 43.8L155.9 44.3L157.0 44.7L158.0 45.1L158.9 45.5L159.7 46.0L160.5 46.5L161.3 47.1L162.2 47.7L163.1 48.4L164.0 49.1L164.9 49.9L165.8 50.7L166.6 51.5L167.4 52.4L168.2 53.4L168.9 54.6L169.7 55.8L170.5 57.1L171.3 58.4L171.9 59.5L172.5 60.5L173.1 61.3L173.5 62.1L173.9 62.8L174.3 63.5L174.7 64.3L175.1 65.2L175.4 66.1L175.8 67.1L176.2 68.1L176.6 69.1L177.0 70.1L177.5 71.0L177.9 71.8L178.4 72.4L178.7 73.0L179.1 73.6L179.6 74.4L180.1 75.3L180.6 76.5L181.2 77.7L181.8 79.0L182.4 80.3L183.0 81.6L183.6 82.9L184.1 84.1L184.7 85.3L185.3 86.5L185.8 87.8L186.3 89.0L186.8 90.2L187.3 91.5L187.8 92.9L188.2 94.2L188.7 95.6L189.2 96.9L189.7 98.2L190.2 99.4L190.7 100.6L191.1 101.8L191.5 103.0L192.0 104.2L192.4 105.5L192.7 106.8L193.1 108.2L193.5 109.6L193.8 111.1L194.2 112.6L194.6 114.1L194.9 115.7L195.3 117.4L195.6 119.0L195.9 120.7L196.3 122.3L196.7 123.8L197.1 125.2L197.4 126.6L197.8 127.9L198.0 129.2L198.2 130.5L198.4 131.7L198.4 133.0L198.4 134.4L198.4 135.8L198.4 137.3L198.4 138.8L198.5 140.3L198.6 141.8L198.7 143.2L198.9 144.6L199.0 146.1L199.1 147.6L199.3 149.1L199.5 150.7L199.7 152.2L199.8 153.7L199.9 155.2L200.0 156.5L199.9 157.9L199.8 159.3L199.6 160.7L199.5 162.1L199.2 163.4L199.0 164.6L198.8 165.7L198.6 166.6L198.4 167.5L198.2 168.3L197.9 169.0L197.6 169.8L197.2 170.6L196.8 171.5L196.2 172.4L195.6 173.4L195.0 174.4L194.4 175.5L194.0 176.6L193.6 177.6L193.3 178.7L193.0 179.7L192.7 180.7L192.4 181.7L192.2 182.7L192.0 183.7L191.8 184.7L191.6 185.5L191.3 186.3L190.9 187.1L190.3 188.1L189.5 189.1L188.5 190.2L187.5 191.3L186.4 192.4L185.5 193.4L184.6 194.4L183.8 195.3L183.0 196.2L182.2 197.0L181.4 197.9L180.5 198.9L179.6 199.8L178.7 200.8L177.9 201.9L177.0 202.8L176.1 203.7L175.1 204.6L174.1 205.3L173.1 206.0L172.0 206.7L170.8 207.3L169.6 207.8L168.3 208.4L167.0 209.0L165.6 209.6L164.2 210.2L162.7 210.7L161.1 211.3L159.6 211.8L158.0 212.4L156.4 212.9L154.8 213.5L153.1 214.1L151.5 214.7L149.9 215.3L148.3 215.9L146.8 216.6L145.3 217.3L143.9 217.9L142.5 218.5L141.3 219.0L140.3 219.3L139.5 219.6L138.7 219.8L138.0 219.9L137.2 219.9L136.2 219.8L134.9 219.6L133.5 219.1L131.9 218.5L130.1 217.9L128.2 217.5L126.0 217.2L123.6 217.3L120.9 217.6L118.1 218.0L115.4 218.4L112.9 218.8L110.9 219.0L109.5 219.1L108.5 219.2L107.8 219.2L107.2 219.1L106.5 219.0L105.5 218.8L104.3 218.5L102.9 218.1L101.5 217.7L100.0 217.1L98.5 216.6L97.0 216.1L95.6 215.5L94.2 214.9L92.8 214.2L91.3 213.5L89.9 212.8L88.5 212.1L87.0 211.5L85.6 210.8L84.2 210.2L82.8 209.6L81.3 208.9L80.0 208.2L78.5 207.5L77.1 206.7L75.6 206.0L74.2 205.2L73.0 204.4L71.8 203.7L70.8 203.0L70.0 202.4L69.3 201.7L68.6 201.0L67.9 200.3L67.1 199.4L66.2 198.5L65.2 197.5L64.2 196.5L63.2 195.4L62.3 194.3L61.4 193.2L60.6 192.1L59.8 191.0L59.0 189.8L58.3 188.7L57.6 187.5L56.8 186.4L56.1 185.2L55.3 184.1L54.5 183.0L53.8 181.9L53.1 180.8L52.6 179.7L52.1 178.4L51.7 177.1L51.4 175.8L51.2 174.4L50.9 173.0L50.6 171.7L50.2 170.6L49.9 169.5L49.5 168.5L49.2 167.5L48.9 166.3L48.6 164.9L48.3 163.3L48.0 161.6L47.8 159.8L47.6 157.8L47.5 155.5L47.6 153.0L47.9 150.2L48.3 147.0L48.9 143.6L49.5 140.1L50.1 136.5L50.6 133.1L51.0 129.7L51.3 126.4L51.7 123.1L52.0 119.7L52.5 116.5L53.2 113.2L54.1 109.9L55.1 106.6L56.3 103.3L57.5 100.0L58.8 96.7L60.0 93.4L61.2 90.0L62.5 86.5L63.7 83.0L65.0 79.6L66.2 76.4L67.6 73.7L69.0 71.3L70.3 69.1L71.6 67.2L72.8 65.4L74.0 63.8L75.0 62.2L75.9 60.8L76.7 59.7L77.5 58.6L78.3 57.7L79.1 56.7L79.9 55.7L80.8 54.7L81.6 53.7L82.4 52.8L83.2 51.9L84.0 51.0L84.8 50.2L85.7 49.5L86.6 48.8L87.6 48.1L88.7 47.4L89.7 46.7L90.8 45.9L91.8 45.2L92.7 44.4L93.4 43.8L94.0 43.3L94.8 42.9L95.7 42.6L96.8 42.3L98.2 42.2L99.7 42.1L101.5 42.0L103.6 42.0L106.0 42.0L108.9 41.9L112.2 41.9L115.7 41.9L119.4 42.0L122.8 42.0Z"/><path id="ps" d="M83.3 52.9L83.9 53.5L84.7 54.3L85.6 55.1L86.5 56.0L87.3 56.9L87.8 57.8L88.3 59.0L88.8 60.6L89.3 62.5L89.7 64.3L90.1 66.0L90.3 67.1L91.0 68.3L92.1 69.0L93.4 69.1L94.6 68.5L95.3 67.3L95.4 66.0L95.1 64.9L94.8 63.3L94.5 61.4L94.0 59.3L93.5 57.2L92.8 55.4L91.8 53.7L90.7 52.3L89.6 51.1L88.6 50.1L87.8 49.4L87.3 48.8L86.0 48.1L84.5 48.1L83.3 48.8L82.5 50.1L82.5 51.6ZM78.7 59.8L81.2 58.4L83.7 57.0L84.7 56.0L85.0 54.7L84.7 53.4L83.7 52.5L82.4 52.1L81.2 52.5L78.7 53.9L76.2 55.3L75.2 56.3L74.9 57.6L75.2 58.8L76.1 59.8L77.4 60.1ZM72.0 65.1L72.2 65.3L72.3 65.4L73.2 65.9L74.2 65.9L75.1 65.4L75.6 64.5L75.6 63.5L75.1 62.6L75.0 62.5L74.8 62.3L73.9 61.8L72.9 61.8L72.0 62.3L71.5 63.2L71.5 64.2ZM67.9 69.7L68.3 71.8L68.6 74.0L69.0 74.8L69.7 75.3L70.6 75.4L71.4 75.0L71.9 74.3L71.9 73.4L71.6 71.3L71.2 69.2L70.9 68.4L70.2 67.9L69.3 67.8L68.5 68.1L68.0 68.8ZM103.7 48.2L105.6 51.5L107.5 54.8L107.9 55.4L108.5 55.8L109.3 55.7L109.9 55.4L110.2 54.7L110.2 54.0L110.0 50.2L109.8 46.4L108.9 45.0L107.4 44.2L105.8 44.2L104.4 45.1L103.6 46.6ZM113.3 48.9L113.9 50.0L114.8 51.5L115.8 53.3L116.9 55.3L118.0 57.1L118.9 58.8L119.7 60.4L120.6 62.0L121.4 63.6L122.1 65.1L122.7 66.3L123.1 67.3L124.2 68.5L125.8 69.0L127.4 68.7L128.6 67.6L129.2 66.1L128.9 64.5L128.4 63.5L127.8 62.3L127.1 60.8L126.2 59.1L125.4 57.4L124.5 55.8L123.6 54.0L122.5 52.1L121.3 50.2L120.3 48.3L119.4 46.8L118.7 45.7L117.6 44.5L116.0 44.1L114.4 44.5L113.2 45.7L112.8 47.3ZM123.1 43.0L123.1 45.9L123.2 50.2L123.3 55.1L123.4 60.3L123.5 65.0L123.7 68.8L123.8 71.7L124.0 74.2L124.2 76.3L124.4 78.0L124.6 79.4L124.7 80.4L125.3 82.1L126.7 83.3L128.4 83.6L130.1 83.0L131.3 81.6L131.6 79.9L131.5 78.8L131.5 77.4L131.3 75.8L131.3 73.8L131.2 71.4L131.2 68.6L131.2 64.9L131.3 60.2L131.5 55.2L131.6 50.2L131.7 46.0L131.8 43.0L131.2 40.8L129.6 39.2L127.4 38.6L125.3 39.2L123.6 40.8ZM125.3 79.6L125.1 81.0L124.8 83.0L124.5 85.4L124.1 87.9L123.9 90.5L123.8 92.9L123.8 95.1L124.0 97.5L124.3 99.7L124.6 101.7L124.9 103.4L125.0 104.6L125.3 105.4L126.0 105.9L126.9 106.1L127.7 105.8L128.2 105.1L128.4 104.3L128.3 103.0L128.2 101.3L128.1 99.3L128.1 97.2L128.1 95.1L128.2 93.1L128.5 91.1L129.0 88.7L129.6 86.3L130.1 84.1L130.6 82.1L131.0 80.7L130.9 79.2L130.0 78.0L128.7 77.3L127.2 77.4L126.0 78.3ZM124.6 108.7L124.6 109.4L124.6 110.1L124.8 110.8L125.3 111.3L126.0 111.5L126.7 111.3L127.2 110.8L127.4 110.1L127.4 109.4L127.4 108.7L127.2 108.0L126.7 107.5L126.0 107.3L125.3 107.5L124.8 108.0ZM127.2 65.8L126.5 66.0L125.4 66.1L124.1 66.3L122.7 66.5L121.2 66.8L119.7 67.2L118.3 67.7L116.9 68.4L115.5 69.1L114.2 69.8L113.2 70.4L112.5 70.7L111.8 71.3L111.5 72.1L111.6 72.9L112.1 73.6L112.9 73.9L113.8 73.8L114.6 73.5L115.7 73.1L117.0 72.7L118.4 72.3L119.7 71.9L120.8 71.7L121.9 71.5L123.2 71.5L124.5 71.5L125.7 71.5L126.8 71.6L127.6 71.6L129.0 71.1L130.0 70.0L130.3 68.5L129.8 67.1L128.7 66.1ZM127.0 71.6L126.3 71.8L125.2 72.0L123.8 72.3L122.4 72.7L120.9 73.1L119.4 73.7L118.0 74.6L116.7 75.5L115.5 76.5L114.4 77.5L113.5 78.2L112.9 78.8L112.3 79.5L112.2 80.3L112.5 81.1L113.2 81.7L114.0 81.8L114.8 81.5L115.6 81.0L116.6 80.4L117.8 79.7L119.0 79.0L120.2 78.4L121.2 78.0L122.2 77.7L123.4 77.6L124.7 77.5L125.9 77.4L127.0 77.3L127.9 77.3L129.2 76.7L130.1 75.5L130.3 74.0L129.7 72.6L128.5 71.7ZM79.6 126.4L79.9 126.7L80.4 127.3L81.1 128.2L82.2 129.2L83.6 130.1L85.3 130.8L87.2 131.1L89.3 131.1L91.4 131.1L93.3 131.0L95.0 130.9L96.1 130.9L97.5 130.4L98.5 129.3L98.9 127.9L98.4 126.5L97.3 125.5L95.9 125.1L94.7 125.2L93.0 125.3L91.2 125.3L89.3 125.4L87.7 125.3L86.7 125.2L86.2 125.0L85.8 124.7L85.3 124.2L84.8 123.7L84.3 123.0L83.8 122.5L82.6 121.7L81.1 121.6L79.8 122.3L79.0 123.6L78.9 125.1ZM55.0 125.5L55.5 124.9L56.0 124.2L56.5 123.5L57.0 123.1L57.2 122.8L57.3 122.8L58.0 122.9L59.4 123.4L61.0 124.1L62.6 124.9L64.0 125.7L65.1 126.2L66.1 126.4L67.1 126.1L67.7 125.4L68.0 124.4L67.7 123.4L66.9 122.7L66.0 122.1L64.6 121.3L63.0 120.3L61.2 119.3L59.4 118.5L57.6 118.1L55.6 118.3L54.1 119.1L53.0 120.1L52.1 121.0L51.6 121.6L51.3 121.9L50.6 123.1L50.7 124.5L51.4 125.6L52.5 126.2L53.9 126.2ZM109.3 114.9L109.1 115.9L108.8 117.3L108.4 119.0L108.1 120.7L107.7 122.5L107.3 124.1L106.9 125.6L106.6 127.2L106.2 128.9L105.8 130.4L105.5 131.6L105.3 132.5L105.4 134.0L106.3 135.2L107.7 135.8L109.1 135.7L110.4 134.8L111.0 133.5L111.1 132.5L111.2 131.3L111.4 129.7L111.5 128.1L111.7 126.4L111.8 124.8L112.0 123.2L112.1 121.4L112.3 119.5L112.4 117.9L112.6 116.4L112.7 115.4L112.6 114.5L112.0 113.8L111.3 113.5L110.4 113.6L109.7 114.1ZM125.3 73.6L126.2 73.8L127.5 74.0L128.9 74.3L130.4 74.6L131.9 74.9L133.0 75.2L134.1 75.6L135.1 76.0L136.2 76.5L137.2 76.9L138.0 77.3L138.6 77.6L139.6 77.8L140.6 77.5L141.3 76.8L141.5 75.8L141.2 74.8L140.5 74.1L139.9 73.8L139.2 73.3L138.2 72.7L137.1 72.0L135.9 71.4L134.7 70.8L133.3 70.2L131.8 69.7L130.2 69.2L128.8 68.7L127.6 68.3L126.7 68.1L125.2 68.1L123.9 68.8L123.2 70.1L123.2 71.6L124.0 72.9ZM126.4 81.6L127.1 81.4L128.1 81.2L129.2 80.9L130.3 80.7L131.4 80.5L132.3 80.4L133.2 80.5L134.3 80.6L135.5 80.8L136.6 81.0L137.6 81.2L138.4 81.3L139.4 81.3L140.3 80.8L140.8 79.9L140.8 78.9L140.2 78.0L139.3 77.5L138.7 77.3L137.7 77.0L136.6 76.6L135.3 76.2L133.9 75.8L132.6 75.6L131.2 75.5L129.8 75.5L128.4 75.6L127.2 75.7L126.3 75.8L125.6 75.9L124.2 76.5L123.3 77.7L123.2 79.1L123.7 80.5L124.9 81.4ZM124.1 80.1L124.2 81.5L124.2 83.6L124.3 86.0L124.4 88.5L124.5 90.9L124.6 93.0L124.7 94.8L124.8 96.5L125.0 98.2L125.1 99.6L125.3 100.8L125.3 101.6L125.6 102.3L126.1 102.8L126.8 102.9L127.5 102.7L127.9 102.2L128.1 101.5L128.1 100.6L128.1 99.4L128.1 98.0L128.2 96.4L128.2 94.7L128.3 93.0L128.4 91.0L128.6 88.6L128.8 86.1L129.0 83.7L129.2 81.7L129.3 80.2L129.0 78.9L128.1 77.9L126.8 77.6L125.5 77.9L124.5 78.8ZM124.6 108.7L124.6 109.4L124.6 110.1L124.8 110.8L125.3 111.3L126.0 111.5L126.7 111.3L127.2 110.8L127.4 110.1L127.4 109.4L127.4 108.7L127.2 108.0L126.7 107.5L126.0 107.3L125.3 107.5L124.8 108.0ZM160.8 52.2L160.4 53.3L159.9 54.7L159.2 56.4L158.6 58.2L157.9 60.0L157.3 61.6L156.7 63.2L156.0 64.9L155.3 66.5L154.6 68.0L154.1 69.3L153.7 70.3L153.5 70.8L153.6 71.3L154.0 71.8L154.5 71.9L155.1 71.8L155.5 71.4L156.2 70.7L157.1 69.7L158.2 68.4L159.5 67.1L160.7 65.7L161.9 64.4L163.0 63.0L164.3 61.5L165.5 60.0L166.7 58.6L167.7 57.5L168.4 56.6L168.9 54.4L168.4 52.2L166.8 50.6L164.6 50.1L162.4 50.6ZM178.0 69.8L173.9 72.2L169.9 74.6L169.4 74.9L169.2 75.4L169.3 76.0L169.6 76.4L170.2 76.6L170.7 76.6L175.2 75.3L179.8 73.9L180.7 73.2L181.1 72.1L180.9 71.0L180.2 70.0L179.1 69.6ZM185.5 90.9L184.5 92.4L183.1 94.6L181.5 97.1L179.7 99.7L178.0 102.1L176.5 104.0L174.9 105.5L173.2 107.0L171.3 108.4L169.5 109.6L168.0 110.6L166.9 111.3L166.5 111.7L166.4 112.3L166.5 112.8L166.9 113.2L167.4 113.4L167.9 113.2L169.2 112.7L170.9 112.1L172.9 111.3L175.2 110.3L177.5 109.2L179.8 107.8L182.1 106.0L184.5 103.9L186.9 101.7L189.1 99.5L190.9 97.8L192.2 96.5L193.2 94.5L193.0 92.2L191.7 90.4L189.6 89.4L187.4 89.6ZM195.1 110.7L191.2 111.4L187.3 112.0L186.5 112.3L185.9 113.0L185.8 113.9L186.1 114.7L186.7 115.2L187.6 115.4L191.5 115.3L195.5 115.3L196.6 114.9L197.4 114.0L197.6 112.8L197.1 111.7L196.2 110.9ZM191.3 123.8L190.2 127.0L189.1 130.2L189.1 131.3L189.5 132.2L190.4 132.7L191.4 132.8L192.3 132.3L192.9 131.5L193.9 128.3L195.0 125.1L195.1 124.0L194.6 123.1L193.8 122.6L192.7 122.5L191.8 123.0ZM141.3 117.4L141.4 118.4L141.4 119.7L141.4 121.3L141.4 123.0L141.4 124.6L141.4 126.0L141.3 127.3L141.3 128.7L141.2 130.0L141.1 131.3L141.0 132.3L141.0 133.1L141.4 134.5L142.5 135.5L143.9 135.9L145.4 135.4L146.4 134.4L146.7 132.9L146.6 132.2L146.5 131.1L146.4 129.9L146.2 128.5L146.0 127.1L145.8 125.7L145.5 124.2L145.2 122.6L144.9 120.9L144.5 119.4L144.3 118.1L144.1 117.1L143.8 116.5L143.3 116.0L142.6 115.9L141.9 116.2L141.5 116.7ZM142.9 56.0L143.0 56.3L143.1 56.5L143.5 57.3L144.3 57.8L145.1 57.8L145.9 57.3L146.3 56.6L146.3 55.7L146.3 55.5L146.2 55.2L145.8 54.4L145.0 54.0L144.2 53.9L143.4 54.4L143.0 55.1ZM176.4 96.8L176.9 96.8L177.3 96.8L178.0 96.6L178.5 96.1L178.7 95.4L178.5 94.7L178.0 94.2L177.3 94.1L176.9 94.1L176.4 94.1L175.7 94.2L175.2 94.7L175.1 95.4L175.2 96.1L175.7 96.6ZM108.0 127.4L107.8 128.4L107.6 129.7L107.3 131.2L107.0 132.9L106.7 134.6L106.4 136.2L106.2 137.8L105.9 139.6L105.6 141.4L105.3 143.1L105.1 144.6L104.9 145.6L104.9 146.2L105.2 146.7L105.7 147.0L106.3 146.9L106.8 146.6L107.1 146.1L107.4 145.1L107.8 143.7L108.3 142.1L108.8 140.3L109.4 138.6L109.9 137.0L110.3 135.4L110.9 133.8L111.4 132.2L111.9 130.7L112.3 129.5L112.5 128.6L112.5 127.4L111.9 126.3L110.9 125.7L109.6 125.8L108.6 126.4ZM51.3 139.6L55.9 138.7L60.5 137.9L61.2 137.6L61.8 136.9L61.9 136.1L61.6 135.3L60.9 134.8L60.1 134.7L55.4 134.8L50.7 135.0L49.6 135.4L48.9 136.3L48.7 137.5L49.1 138.7L50.1 139.4ZM52.3 142.1L54.1 142.2L55.9 142.2L56.7 142.0L57.3 141.5L57.6 140.7L57.5 139.9L56.9 139.2L56.1 139.0L54.4 138.7L52.6 138.4L51.6 138.6L50.9 139.2L50.6 140.1L50.8 141.1L51.4 141.8ZM51.5 150.3L51.8 153.5L52.1 156.7L52.3 157.4L52.8 157.8L53.6 157.9L54.2 157.7L54.7 157.2L54.8 156.4L54.5 153.2L54.2 150.0L54.0 149.4L53.4 148.9L52.7 148.8L52.1 149.0L51.6 149.6ZM56.9 155.8L59.7 155.3L62.6 154.8L63.1 154.6L63.5 154.2L63.6 153.6L63.3 153.0L62.9 152.7L62.3 152.6L59.4 152.8L56.5 153.1L55.9 153.3L55.4 153.9L55.3 154.6L55.6 155.3L56.2 155.7ZM48.2 160.4L48.9 164.7L49.6 168.9L49.9 169.6L50.5 170.0L51.2 170.1L51.9 169.8L52.3 169.2L52.4 168.5L51.6 164.2L50.9 159.9L50.6 159.3L50.1 158.9L49.3 158.8L48.7 159.1L48.3 159.7ZM50.2 163.2L51.1 163.2L52.3 163.3L53.7 163.4L55.3 163.4L57.0 163.6L58.7 163.7L60.6 163.9L62.9 164.2L65.3 164.4L67.5 164.7L69.5 165.0L70.8 165.1L71.4 165.1L71.9 164.7L72.1 164.2L72.1 163.6L71.7 163.1L71.2 162.9L69.8 162.6L67.9 162.3L65.6 161.9L63.3 161.5L61.0 161.2L59.0 160.9L57.3 160.7L55.5 160.5L53.9 160.3L52.5 160.2L51.3 160.0L50.4 160.0L49.6 160.1L49.0 160.7L48.7 161.5L48.8 162.3L49.4 162.9ZM66.6 188.0L67.2 187.8L68.0 187.5L69.0 187.2L70.1 186.8L71.2 186.4L72.2 186.1L73.2 185.8L74.4 185.5L75.6 185.2L76.8 185.0L77.8 184.7L78.5 184.6L79.2 184.2L79.7 183.5L79.7 182.7L79.3 181.9L78.6 181.5L77.8 181.4L77.1 181.6L76.1 181.7L74.9 182.0L73.7 182.2L72.4 182.5L71.3 182.7L70.1 183.0L69.0 183.4L67.9 183.7L66.9 184.1L66.0 184.3L65.4 184.5L64.6 185.1L64.2 185.9L64.2 186.9L64.8 187.7L65.6 188.1ZM73.4 196.6L73.4 197.4L73.4 198.5L73.4 200.0L73.5 201.7L73.8 203.4L74.6 205.1L75.8 206.4L77.2 207.4L78.7 208.1L80.2 208.7L81.8 209.0L83.4 209.0L84.9 208.7L86.3 208.0L87.5 207.1L88.6 206.1L89.5 204.8L90.4 203.3L91.0 201.4L91.5 199.3L91.9 197.0L92.2 194.9L92.4 193.2L92.6 191.9L92.5 190.7L91.8 189.8L90.7 189.3L89.5 189.4L88.5 190.1L88.0 191.2L87.8 192.5L87.5 194.2L87.2 196.3L86.8 198.3L86.4 200.1L85.9 201.3L85.5 202.1L84.9 202.9L84.3 203.4L83.8 203.8L83.3 204.0L82.9 204.1L82.4 204.1L81.6 203.9L80.7 203.6L79.8 203.1L79.1 202.6L78.8 202.3L78.7 202.0L78.6 201.1L78.5 199.9L78.5 198.6L78.6 197.4L78.6 196.5L78.2 195.3L77.3 194.3L76.0 194.0L74.7 194.4L73.8 195.3ZM96.3 191.0L96.3 191.8L96.4 193.0L96.5 194.4L96.6 195.9L96.7 197.3L97.0 198.5L97.2 199.4L97.5 200.2L97.9 201.1L98.6 202.0L99.7 202.6L101.1 202.9L102.5 202.6L103.9 202.1L105.3 201.4L106.6 200.8L107.6 200.2L108.4 199.9L109.2 199.1L109.5 198.1L109.3 197.1L108.6 196.2L107.5 195.9L106.5 196.1L105.7 196.5L104.6 197.1L103.4 197.8L102.3 198.4L101.3 198.8L100.9 198.9L101.0 198.9L101.2 199.0L101.3 199.0L101.1 198.8L101.0 198.2L100.8 197.5L100.6 196.7L100.4 195.5L100.3 194.1L100.2 192.7L100.1 191.6L100.0 190.7L99.7 189.8L98.9 189.2L98.0 189.0L97.1 189.3L96.5 190.1ZM126.3 134.3L125.7 138.2L125.2 142.1L125.2 142.7L125.6 143.2L126.1 143.4L126.7 143.3L127.2 143.0L127.4 142.4L128.0 138.5L128.6 134.6L128.5 134.0L128.1 133.5L127.6 133.3L127.0 133.4L126.5 133.7ZM124.6 149.1L124.6 149.7L124.6 150.3L124.7 150.9L125.1 151.3L125.7 151.4L126.3 151.3L126.7 150.9L126.8 150.3L126.8 149.7L126.8 149.1L126.7 148.6L126.3 148.2L125.7 148.0L125.1 148.2L124.7 148.6ZM124.2 158.3L124.2 158.7L124.2 159.1L124.3 159.7L124.7 160.1L125.3 160.3L125.9 160.1L126.3 159.7L126.4 159.1L126.4 158.7L126.4 158.3L126.3 157.7L125.9 157.3L125.3 157.2L124.7 157.3L124.3 157.7ZM126.1 163.8L126.1 164.9L126.2 166.6L126.2 168.5L126.3 170.4L126.4 172.3L126.5 173.9L126.6 175.2L126.7 176.4L126.8 177.4L126.9 178.4L127.0 179.1L127.0 179.7L127.4 180.6L128.2 181.1L129.1 181.3L130.0 180.9L130.6 180.1L130.7 179.2L130.6 178.6L130.5 177.9L130.3 177.0L130.1 175.9L130.0 174.8L129.8 173.6L129.6 172.1L129.5 170.2L129.3 168.3L129.1 166.4L128.9 164.8L128.8 163.6L128.6 162.9L128.0 162.5L127.3 162.3L126.7 162.6L126.2 163.1ZM122.6 170.1L122.9 170.4L123.2 170.7L123.8 171.0L124.5 171.0L125.1 170.7L125.5 170.1L125.5 169.4L125.1 168.7L124.8 168.5L124.5 168.2L123.9 167.8L123.2 167.8L122.6 168.2L122.2 168.8L122.2 169.5ZM123.0 180.9L123.0 181.6L123.0 182.3L123.2 183.1L123.8 183.7L124.6 183.9L125.4 183.7L126.0 183.1L126.2 182.3L126.2 181.6L126.2 180.9L126.0 180.0L125.4 179.5L124.6 179.2L123.8 179.5L123.2 180.0ZM113.0 179.0L113.5 179.2L114.2 179.5L115.0 179.8L115.8 180.2L116.6 180.6L117.3 180.9L118.0 181.3L118.7 181.7L119.3 182.1L119.9 182.4L120.5 182.7L120.9 182.9L121.7 183.2L122.5 183.0L123.1 182.4L123.3 181.6L123.1 180.8L122.6 180.2L122.2 180.0L121.7 179.6L121.1 179.2L120.4 178.8L119.7 178.3L119.0 177.9L118.2 177.5L117.4 177.0L116.6 176.6L115.8 176.2L115.1 175.9L114.7 175.6L113.7 175.4L112.8 175.7L112.2 176.5L112.0 177.4L112.3 178.3ZM126.0 191.8L126.6 191.8L127.3 191.7L128.2 191.7L129.3 191.6L130.4 191.5L131.4 191.2L132.5 190.9L133.5 190.4L134.5 189.9L135.4 189.4L136.2 189.0L136.7 188.7L137.3 188.2L137.6 187.4L137.5 186.6L136.9 186.0L136.1 185.7L135.3 185.8L134.7 186.1L134.0 186.4L133.1 186.8L132.2 187.1L131.3 187.4L130.6 187.6L129.9 187.7L129.0 187.7L128.1 187.7L127.3 187.7L126.5 187.6L126.0 187.6L124.9 187.9L124.2 188.7L123.9 189.8L124.2 190.8L125.0 191.5ZM141.1 128.4L142.0 132.3L143.0 136.1L143.3 136.9L144.0 137.4L144.9 137.4L145.6 137.1L146.1 136.4L146.2 135.6L145.7 131.6L145.2 127.6L144.7 126.6L143.8 126.0L142.8 125.9L141.8 126.4L141.2 127.3ZM126.3 134.3L125.8 137.8L125.3 141.4L125.4 142.0L125.7 142.5L126.3 142.7L126.9 142.6L127.3 142.3L127.6 141.7L128.1 138.2L128.6 134.6L128.5 134.0L128.1 133.5L127.6 133.3L127.0 133.4L126.5 133.7ZM124.4 149.7L124.4 150.1L124.4 150.6L124.6 151.1L125.0 151.6L125.6 151.7L126.1 151.6L126.6 151.1L126.7 150.6L126.7 150.1L126.7 149.7L126.6 149.1L126.1 148.7L125.6 148.6L125.0 148.7L124.6 149.1ZM124.2 158.3L124.2 158.7L124.2 159.1L124.3 159.7L124.7 160.1L125.3 160.3L125.9 160.1L126.3 159.7L126.4 159.1L126.4 158.7L126.4 158.3L126.3 157.7L125.9 157.3L125.3 157.2L124.7 157.3L124.3 157.7ZM126.1 163.8L126.1 164.9L126.2 166.6L126.2 168.5L126.3 170.4L126.4 172.3L126.5 173.9L126.6 175.2L126.7 176.4L126.8 177.4L126.9 178.4L127.0 179.1L127.0 179.7L127.4 180.6L128.2 181.1L129.1 181.3L130.0 180.9L130.6 180.1L130.7 179.2L130.6 178.6L130.5 177.9L130.3 177.0L130.1 175.9L130.0 174.8L129.8 173.6L129.6 172.1L129.5 170.2L129.3 168.3L129.1 166.4L128.9 164.8L128.8 163.6L128.6 162.9L128.0 162.5L127.3 162.3L126.7 162.6L126.2 163.1ZM122.6 170.1L122.9 170.4L123.2 170.7L123.8 171.0L124.5 171.0L125.1 170.7L125.5 170.1L125.5 169.4L125.1 168.7L124.8 168.5L124.5 168.2L123.9 167.8L123.2 167.8L122.6 168.2L122.2 168.8L122.2 169.5ZM123.0 180.9L123.0 181.6L123.0 182.3L123.2 183.1L123.8 183.7L124.6 183.9L125.4 183.7L126.0 183.1L126.2 182.3L126.2 181.6L126.2 180.9L126.0 180.0L125.4 179.5L124.6 179.2L123.8 179.5L123.2 180.0ZM134.2 170.2L134.3 170.3L134.5 170.4L134.9 170.5L135.4 170.3L135.7 170.0L135.8 169.5L135.6 169.1L135.3 168.8L135.1 168.7L135.0 168.6L134.5 168.5L134.1 168.7L133.8 169.0L133.7 169.5L133.8 169.9ZM181.2 134.4L182.0 134.2L183.2 134.1L184.5 133.9L186.0 133.7L187.4 133.4L188.6 133.1L189.8 132.8L190.9 132.3L191.9 131.8L192.8 131.4L193.5 131.0L194.0 130.8L194.7 130.1L195.0 129.2L194.8 128.3L194.1 127.6L193.2 127.3L192.3 127.5L191.7 127.8L191.1 128.2L190.3 128.7L189.4 129.2L188.5 129.6L187.6 130.0L186.6 130.3L185.3 130.7L184.0 131.0L182.7 131.2L181.6 131.5L180.8 131.6L180.1 131.9L179.7 132.5L179.6 133.2L179.9 133.9L180.5 134.3ZM198.1 137.8L197.4 138.3L196.3 139.0L195.1 139.9L193.8 140.7L192.6 141.6L191.5 142.3L190.6 142.9L189.7 143.6L188.8 144.2L188.1 144.7L187.4 145.2L187.0 145.5L186.5 145.9L186.3 146.4L186.4 147.0L186.8 147.5L187.3 147.7L187.9 147.6L188.4 147.5L189.2 147.3L190.1 147.2L191.1 147.0L192.2 146.8L193.3 146.6L194.6 146.4L196.0 146.1L197.5 145.9L199.0 145.6L200.2 145.4L201.1 145.3L202.7 144.1L203.5 142.2L203.3 140.1L202.1 138.4L200.2 137.6ZM202.2 152.1L201.5 152.2L200.4 152.4L199.1 152.6L197.7 152.8L196.3 153.1L194.9 153.4L193.6 153.9L192.2 154.4L190.8 154.9L189.6 155.4L188.5 155.9L187.8 156.2L187.3 156.5L187.0 157.0L187.1 157.6L187.4 158.1L187.9 158.4L188.5 158.4L189.3 158.2L190.4 157.9L191.7 157.6L193.1 157.3L194.4 157.0L195.6 156.9L196.8 156.8L198.1 156.7L199.5 156.7L200.7 156.7L201.8 156.8L202.6 156.8L203.8 156.4L204.5 155.4L204.8 154.2L204.4 153.1L203.4 152.3ZM183.2 171.1L183.6 171.8L184.1 172.8L184.8 174.0L185.5 175.4L186.3 176.6L187.4 177.8L188.6 178.7L189.9 179.3L191.1 179.7L192.1 179.9L192.8 180.1L193.3 180.3L194.9 180.2L196.2 179.3L196.9 177.9L196.7 176.3L195.9 175.0L194.4 174.3L193.8 174.2L193.0 174.2L192.2 174.2L191.4 174.1L190.8 174.0L190.3 173.9L189.8 173.5L188.9 172.8L188.1 171.8L187.2 170.8L186.5 169.9L185.9 169.2L185.3 168.7L184.5 168.5L183.7 168.8L183.1 169.4L183.0 170.3ZM177.7 183.0L178.1 183.4L178.8 184.1L179.7 185.0L180.7 185.9L181.9 186.7L183.3 187.3L184.7 187.5L186.0 187.5L187.4 187.4L188.7 187.0L189.9 186.5L191.2 185.8L192.4 184.7L193.4 183.5L194.4 182.3L195.1 181.1L195.7 180.2L196.2 179.6L196.6 178.1L196.3 176.6L195.2 175.4L193.7 174.9L192.1 175.3L191.0 176.4L190.6 177.1L190.1 178.2L189.5 179.3L188.9 180.3L188.4 181.2L188.0 181.7L187.5 182.0L186.9 182.4L186.2 182.7L185.5 182.9L184.9 182.9L184.4 183.0L183.9 182.8L183.2 182.5L182.3 181.9L181.4 181.2L180.6 180.6L180.0 180.1L179.2 179.7L178.2 179.8L177.4 180.4L177.0 181.3L177.1 182.2ZM167.3 177.5L167.3 178.3L167.4 179.6L167.5 181.1L167.7 182.7L168.1 184.4L168.6 185.9L169.3 187.3L170.1 188.5L171.1 189.6L172.0 190.6L173.0 191.5L173.9 192.4L174.9 193.4L176.0 194.3L177.2 195.2L178.2 196.0L179.0 196.6L179.6 197.0L180.8 197.5L182.0 197.3L182.9 196.5L183.3 195.4L183.1 194.2L182.4 193.2L181.7 192.8L180.8 192.2L179.8 191.5L178.7 190.8L177.6 190.0L176.7 189.3L175.8 188.5L174.8 187.7L174.0 186.9L173.2 186.0L172.5 185.2L172.0 184.4L171.6 183.4L171.2 182.1L171.0 180.6L170.8 179.2L170.6 178.0L170.5 177.1L170.1 176.3L169.5 175.8L168.6 175.7L167.9 176.0L167.4 176.7ZM165.4 196.6L168.2 195.3L170.9 194.0L171.7 193.5L172.1 192.6L172.0 191.6L171.5 190.9L170.6 190.5L169.6 190.5L166.7 191.4L163.8 192.2L162.8 192.9L162.3 194.0L162.4 195.2L163.1 196.2L164.2 196.7ZM148.7 186.0L148.8 187.2L148.9 188.9L149.0 190.9L149.2 193.1L149.5 195.2L149.9 197.1L150.4 198.7L151.1 200.2L151.8 201.6L152.6 202.8L153.5 204.0L154.4 205.2L155.6 206.3L156.9 207.5L158.2 208.5L159.4 209.4L160.4 210.1L161.1 210.6L162.2 211.0L163.4 210.8L164.3 210.1L164.8 208.9L164.6 207.8L163.8 206.8L163.0 206.3L162.0 205.6L160.8 204.8L159.6 204.0L158.5 203.1L157.6 202.3L156.7 201.4L156.0 200.4L155.3 199.4L154.6 198.4L154.0 197.2L153.5 196.0L153.1 194.5L152.8 192.6L152.5 190.6L152.2 188.6L152.0 186.9L151.9 185.7L151.6 184.9L150.9 184.4L150.1 184.3L149.3 184.5L148.8 185.2ZM142.6 204.1L144.3 203.9L146.1 203.7L146.7 203.5L147.0 203.0L147.1 202.4L146.9 201.9L146.4 201.5L145.9 201.4L144.1 201.7L142.3 201.9L141.7 202.1L141.4 202.6L141.3 203.1L141.5 203.7L142.0 204.0ZM168.0 207.6L170.2 206.8L172.3 205.9L173.0 205.4L173.3 204.7L173.2 203.8L172.7 203.2L171.9 202.8L171.1 202.9L169.0 203.8L166.8 204.6L166.2 205.1L165.8 205.9L165.9 206.7L166.4 207.4L167.2 207.7ZM123.8 188.8L124.2 189.1L124.8 189.7L125.6 190.6L126.6 191.4L128.0 192.2L129.8 192.3L131.5 191.8L133.0 190.8L134.4 189.8L135.8 188.7L136.9 187.8L137.7 187.2L138.2 186.5L138.3 185.7L138.0 184.9L137.4 184.4L136.5 184.3L135.8 184.5L134.9 185.1L133.7 186.0L132.4 186.9L131.0 187.8L129.9 188.4L129.3 188.5L129.2 188.5L128.9 188.2L128.4 187.7L127.8 187.0L127.3 186.3L126.8 185.8L125.8 185.3L124.7 185.3L123.8 185.8L123.3 186.7L123.3 187.8ZM125.6 202.7L125.7 203.3L126.0 204.2L126.3 205.2L126.7 206.3L127.2 207.5L127.8 208.5L128.4 209.4L129.1 210.2L129.8 211.0L130.7 211.7L131.7 212.4L132.8 213.0L134.1 213.6L135.5 214.1L137.0 214.6L138.6 215.0L140.4 215.3L142.2 215.5L144.2 215.4L146.3 215.2L148.5 214.9L150.5 214.5L152.2 214.2L153.4 214.0L154.4 213.5L155.0 212.6L155.1 211.5L154.6 210.6L153.7 209.9L152.6 209.9L151.4 210.1L149.7 210.5L147.8 210.9L145.8 211.3L143.9 211.5L142.2 211.6L140.8 211.5L139.4 211.3L138.0 211.0L136.6 210.6L135.4 210.2L134.3 209.8L133.5 209.3L132.8 208.9L132.2 208.4L131.7 207.9L131.1 207.3L130.7 206.7L130.2 206.0L129.8 205.1L129.5 204.1L129.1 203.1L128.8 202.3L128.6 201.7L128.1 201.0L127.4 200.6L126.6 200.7L125.9 201.1L125.5 201.9ZM129.6 204.9L131.4 203.1L133.2 201.4L133.6 200.9L133.6 200.4L133.3 199.8L132.9 199.5L132.3 199.5L131.7 199.7L129.8 201.2L127.8 202.8L127.4 203.4L127.4 204.1L127.7 204.7L128.2 205.1L129.0 205.2ZM149.7 185.5L149.7 186.5L149.7 187.9L149.7 189.6L149.7 191.4L149.7 193.2L149.8 194.8L149.9 196.2L150.0 197.5L150.1 198.9L150.3 200.3L150.7 201.8L151.4 203.2L152.3 204.6L153.5 205.9L154.8 207.0L156.1 208.0L157.3 208.9L158.4 209.7L159.5 210.3L160.7 210.7L161.7 210.9L162.5 211.1L163.1 211.1L163.5 211.2L164.8 211.1L165.8 210.3L166.4 209.1L166.2 207.7L165.4 206.7L164.2 206.1L163.7 206.1L163.1 206.0L162.5 206.0L161.9 205.9L161.3 205.8L160.7 205.5L159.7 205.0L158.6 204.4L157.4 203.6L156.3 202.8L155.4 201.9L154.7 201.1L154.2 200.4L153.9 199.4L153.6 198.4L153.4 197.2L153.2 195.8L153.0 194.5L152.7 192.9L152.5 191.3L152.4 189.5L152.2 187.8L152.1 186.4L152.0 185.4L151.8 184.8L151.4 184.4L150.8 184.3L150.3 184.5L149.9 184.9ZM143.5 203.7L145.1 203.4L146.7 203.1L147.1 202.9L147.4 202.5L147.5 202.0L147.3 201.6L146.9 201.3L146.4 201.3L144.8 201.5L143.1 201.8L142.7 202.0L142.4 202.4L142.4 202.9L142.6 203.3L143.0 203.6ZM91.6 212.5L92.7 212.9L93.8 213.3L94.2 213.4L94.7 213.2L95.0 212.8L95.0 212.3L94.8 211.9L94.5 211.6L93.4 211.2L92.3 210.7L91.8 210.7L91.4 210.9L91.1 211.2L91.0 211.7L91.2 212.2ZM88.5 190.6L88.4 191.3L88.2 192.3L88.0 193.5L87.8 194.8L87.6 196.2L87.3 197.5L87.0 199.0L86.7 200.6L86.4 202.2L86.0 203.8L85.8 205.2L85.6 206.1L85.6 207.2L86.3 208.1L87.2 208.6L88.3 208.5L89.2 207.9L89.7 206.9L89.8 205.9L90.1 204.6L90.4 203.0L90.7 201.3L90.9 199.7L91.2 198.2L91.4 196.8L91.6 195.4L91.8 194.1L91.9 192.9L92.1 191.9L92.2 191.1L92.1 190.2L91.5 189.4L90.6 189.0L89.6 189.1L88.9 189.7ZM99.5 202.6L103.4 200.6L107.2 198.5L107.7 198.0L107.9 197.3L107.7 196.6L107.2 196.1L106.5 195.9L105.9 196.1L102.1 198.4L98.4 200.7L98.0 201.1L97.8 201.6L98.0 202.2L98.4 202.6L99.0 202.8ZM111.4 191.4L114.6 191.4L118.4 194.6L121.7 198.4L125.5 198.4L126.0 201.6L123.3 206.5L120.6 210.3L117.4 215.2L113.6 216.2L112.5 213.0L110.3 213.0L109.2 217.3L103.3 217.3L101.1 210.3L106.0 207.6L110.9 204.4L114.1 200.6L113.0 198.9L109.2 198.9L107.6 196.2L110.3 194.6ZM125.5 208.7L127.6 212.5L125.5 215.9L123.3 212.5Z"/><path id="ps2" d="M83.9 52.2L84.5 52.8L85.4 53.6L86.3 54.4L87.2 55.4L88.0 56.4L88.6 57.4L89.1 58.7L89.7 60.4L90.1 62.3L90.5 64.2L90.9 65.8L91.1 66.9L91.6 67.8L92.3 68.2L93.2 68.3L94.0 67.9L94.5 67.1L94.6 66.2L94.3 65.1L94.0 63.5L93.6 61.5L93.2 59.5L92.6 57.5L92.0 55.8L91.1 54.2L90.1 52.9L89.0 51.7L88.0 50.8L87.2 50.0L86.7 49.5L85.8 49.0L84.8 49.0L83.9 49.5L83.4 50.4L83.4 51.4ZM78.3 59.1L80.8 57.7L83.3 56.2L83.9 55.6L84.2 54.7L83.9 53.8L83.3 53.2L82.4 53.0L81.6 53.2L79.1 54.6L76.6 56.1L75.9 56.7L75.7 57.6L75.9 58.4L76.5 59.1L77.4 59.3ZM72.5 64.7L72.6 64.8L72.8 65.0L73.4 65.3L74.1 65.3L74.7 65.0L75.0 64.3L75.0 63.7L74.7 63.0L74.5 62.9L74.4 62.8L73.8 62.4L73.1 62.4L72.5 62.8L72.1 63.4L72.1 64.1ZM68.4 69.6L68.8 71.8L69.2 73.9L69.4 74.4L69.9 74.8L70.5 74.8L71.0 74.6L71.4 74.1L71.4 73.5L71.1 71.4L70.7 69.2L70.5 68.7L70.0 68.4L69.4 68.3L68.8 68.5L68.5 69.0ZM104.7 47.9L106.3 51.3L107.9 54.7L108.2 55.1L108.6 55.4L109.1 55.3L109.5 55.1L109.8 54.6L109.8 54.2L109.3 50.4L108.8 46.7L108.2 45.7L107.2 45.2L106.1 45.2L105.1 45.8L104.6 46.8ZM114.1 48.4L114.8 49.5L115.7 51.0L116.7 52.8L117.8 54.8L118.9 56.6L119.8 58.3L120.7 59.9L121.5 61.5L122.3 63.1L123.0 64.6L123.6 65.9L124.1 66.8L124.8 67.6L125.9 68.0L126.9 67.8L127.8 67.1L128.1 66.0L127.9 64.9L127.5 64.0L126.9 62.7L126.1 61.2L125.3 59.6L124.5 57.9L123.6 56.3L122.7 54.5L121.6 52.6L120.5 50.7L119.4 48.9L118.5 47.3L117.9 46.2L117.1 45.4L116.0 45.1L114.9 45.4L114.1 46.2L113.9 47.3ZM124.5 43.0L124.5 46.0L124.6 50.2L124.6 55.1L124.7 60.2L124.8 65.0L124.9 68.8L125.0 71.7L125.2 74.2L125.4 76.2L125.6 77.9L125.7 79.3L125.8 80.3L126.2 81.5L127.1 82.3L128.3 82.5L129.5 82.1L130.3 81.2L130.5 80.0L130.4 78.9L130.3 77.5L130.2 75.8L130.1 73.9L130.0 71.5L130.0 68.7L130.0 64.9L130.0 60.2L130.1 55.2L130.2 50.2L130.3 46.0L130.4 43.0L130.0 41.5L128.9 40.4L127.4 40.1L126.0 40.4L124.9 41.5ZM126.2 79.8L126.0 81.2L125.7 83.2L125.3 85.5L124.9 88.1L124.6 90.6L124.5 92.9L124.5 95.1L124.7 97.4L124.9 99.6L125.2 101.6L125.4 103.3L125.6 104.5L125.8 105.1L126.2 105.5L126.8 105.6L127.4 105.4L127.8 104.9L127.9 104.3L127.8 103.1L127.7 101.4L127.5 99.4L127.4 97.3L127.4 95.1L127.5 93.1L127.8 91.0L128.2 88.6L128.8 86.2L129.3 83.9L129.7 81.9L130.1 80.5L130.0 79.5L129.4 78.7L128.5 78.2L127.5 78.3L126.7 78.9ZM125.0 108.7L125.0 109.4L125.0 110.1L125.2 110.6L125.5 111.0L126.0 111.1L126.5 111.0L126.8 110.6L127.0 110.1L127.0 109.4L127.0 108.7L126.8 108.2L126.5 107.9L126.0 107.8L125.5 107.9L125.2 108.2ZM127.3 66.8L126.5 66.9L125.5 67.0L124.2 67.1L122.8 67.3L121.3 67.6L119.9 67.9L118.5 68.4L117.1 69.0L115.7 69.7L114.5 70.3L113.4 70.9L112.7 71.2L112.2 71.6L112.0 72.2L112.1 72.7L112.5 73.2L113.0 73.4L113.6 73.3L114.4 73.0L115.5 72.6L116.8 72.1L118.2 71.6L119.5 71.2L120.7 70.9L121.8 70.8L123.1 70.7L124.4 70.7L125.7 70.7L126.8 70.7L127.6 70.7L128.5 70.3L129.2 69.6L129.4 68.6L129.0 67.6L128.3 67.0ZM127.1 72.5L126.4 72.7L125.3 72.9L124.0 73.1L122.5 73.4L121.1 73.9L119.7 74.4L118.4 75.2L117.1 76.1L115.8 77.0L114.7 77.9L113.8 78.7L113.2 79.2L112.8 79.7L112.7 80.3L112.9 80.8L113.4 81.2L114.0 81.3L114.5 81.1L115.3 80.6L116.3 79.9L117.4 79.2L118.6 78.4L119.8 77.8L120.9 77.3L122.0 77.0L123.2 76.8L124.5 76.6L125.8 76.5L126.9 76.4L127.7 76.4L128.7 75.9L129.2 75.1L129.4 74.1L128.9 73.2L128.1 72.6ZM80.3 125.8L80.6 126.1L81.1 126.7L81.8 127.6L82.8 128.5L84.0 129.3L85.5 129.9L87.3 130.2L89.3 130.2L91.3 130.2L93.3 130.1L94.9 130.0L96.1 129.9L97.0 129.7L97.7 128.9L97.9 127.9L97.7 127.0L96.9 126.3L95.9 126.1L94.8 126.1L93.1 126.2L91.2 126.3L89.3 126.3L87.6 126.3L86.5 126.1L85.8 125.8L85.2 125.4L84.6 124.9L84.1 124.2L83.6 123.6L83.1 123.1L82.3 122.6L81.3 122.5L80.4 123.0L79.9 123.9L79.8 124.9ZM54.4 124.9L54.9 124.4L55.4 123.7L56.0 123.0L56.5 122.4L57.0 122.1L57.3 122.0L58.2 122.2L59.7 122.8L61.3 123.5L62.9 124.4L64.4 125.1L65.4 125.6L66.1 125.8L66.7 125.6L67.2 125.1L67.3 124.4L67.1 123.7L66.6 123.2L65.7 122.7L64.3 121.9L62.7 120.9L60.9 120.0L59.2 119.2L57.5 118.8L55.9 119.1L54.5 119.8L53.5 120.7L52.8 121.5L52.2 122.2L51.9 122.5L51.4 123.3L51.5 124.2L51.9 125.0L52.7 125.4L53.6 125.4ZM109.9 115.0L109.7 116.0L109.4 117.4L109.1 119.0L108.7 120.8L108.4 122.6L108.0 124.2L107.7 125.7L107.4 127.4L107.0 129.0L106.7 130.5L106.4 131.8L106.2 132.7L106.3 133.7L106.9 134.5L107.8 134.9L108.8 134.8L109.6 134.2L110.1 133.3L110.2 132.4L110.3 131.1L110.5 129.6L110.7 127.9L110.9 126.3L111.1 124.7L111.3 123.0L111.5 121.3L111.7 119.5L111.9 117.8L112.0 116.3L112.1 115.3L112.1 114.7L111.7 114.2L111.2 114.0L110.6 114.1L110.1 114.4ZM125.5 72.7L126.4 72.9L127.7 73.2L129.1 73.5L130.6 73.8L132.1 74.2L133.3 74.5L134.4 74.9L135.5 75.4L136.5 75.9L137.5 76.3L138.3 76.7L138.9 77.0L139.6 77.2L140.3 77.0L140.8 76.5L140.9 75.8L140.7 75.1L140.2 74.7L139.6 74.3L138.9 73.9L137.9 73.3L136.8 72.7L135.6 72.0L134.4 71.5L133.1 71.0L131.6 70.5L130.0 70.0L128.6 69.6L127.3 69.2L126.5 69.0L125.5 69.0L124.6 69.5L124.1 70.4L124.1 71.4L124.6 72.3ZM126.3 80.6L127.0 80.5L128.0 80.3L129.1 80.1L130.2 79.9L131.4 79.7L132.3 79.7L133.3 79.7L134.5 79.9L135.7 80.1L136.8 80.4L137.8 80.6L138.5 80.7L139.2 80.7L139.8 80.4L140.2 79.8L140.2 79.1L139.8 78.5L139.2 78.1L138.5 77.9L137.6 77.6L136.4 77.2L135.1 76.9L133.8 76.5L132.5 76.3L131.2 76.3L129.9 76.4L128.6 76.5L127.4 76.6L126.4 76.7L125.7 76.8L124.8 77.2L124.2 78.0L124.1 79.0L124.5 79.9L125.3 80.5ZM125.0 80.1L125.0 81.5L125.0 83.6L125.0 86.0L125.1 88.5L125.1 90.9L125.2 93.0L125.2 94.8L125.4 96.5L125.5 98.1L125.6 99.6L125.7 100.7L125.8 101.6L125.9 102.1L126.3 102.4L126.8 102.5L127.2 102.4L127.6 102.0L127.7 101.5L127.7 100.6L127.6 99.5L127.6 98.0L127.6 96.5L127.7 94.8L127.7 93.0L127.8 91.0L127.9 88.6L128.1 86.1L128.2 83.7L128.4 81.6L128.5 80.2L128.3 79.3L127.6 78.7L126.8 78.4L125.9 78.6L125.2 79.2ZM125.0 108.7L125.0 109.4L125.0 110.1L125.2 110.6L125.5 111.0L126.0 111.1L126.5 111.0L126.8 110.6L127.0 110.1L127.0 109.4L127.0 108.7L126.8 108.2L126.5 107.9L126.0 107.8L125.5 107.9L125.2 108.2ZM162.0 53.0L161.6 54.0L161.0 55.4L160.3 57.0L159.5 58.8L158.7 60.5L158.0 62.1L157.3 63.6L156.5 65.2L155.7 66.8L155.0 68.3L154.4 69.5L153.9 70.5L153.8 70.8L153.9 71.2L154.2 71.5L154.5 71.6L154.9 71.5L155.2 71.3L155.8 70.5L156.7 69.4L157.8 68.1L158.9 66.7L160.1 65.3L161.1 63.9L162.2 62.5L163.3 61.0L164.5 59.4L165.6 58.0L166.5 56.8L167.1 55.9L167.5 54.4L167.1 53.0L166.0 51.9L164.6 51.5L163.1 51.9ZM178.2 70.4L174.1 72.7L170.0 74.9L169.7 75.1L169.5 75.5L169.6 75.9L169.8 76.2L170.2 76.3L170.6 76.3L175.0 74.8L179.5 73.3L180.1 72.8L180.4 72.0L180.3 71.2L179.8 70.6L179.0 70.3ZM186.6 91.8L185.5 93.3L184.1 95.4L182.3 97.8L180.5 100.4L178.7 102.7L177.0 104.6L175.4 106.1L173.5 107.5L171.6 108.8L169.8 110.0L168.2 110.9L167.1 111.6L166.8 111.9L166.7 112.3L166.8 112.6L167.0 112.9L167.4 113.0L167.8 112.9L169.0 112.4L170.7 111.7L172.7 110.8L174.9 109.8L177.1 108.6L179.3 107.1L181.4 105.4L183.7 103.2L186.0 100.9L188.1 98.7L189.9 96.9L191.1 95.6L191.8 94.2L191.6 92.7L190.8 91.5L189.4 90.8L187.9 90.9ZM195.1 111.5L191.2 112.0L187.3 112.6L186.8 112.8L186.4 113.2L186.3 113.8L186.5 114.4L186.9 114.8L187.5 114.9L191.5 114.7L195.4 114.5L196.2 114.3L196.7 113.7L196.8 112.9L196.6 112.1L195.9 111.6ZM191.9 124.0L190.8 127.2L189.7 130.4L189.7 131.1L190.0 131.8L190.6 132.1L191.3 132.2L191.9 131.9L192.3 131.3L193.4 128.1L194.4 124.9L194.5 124.2L194.2 123.5L193.6 123.1L192.9 123.1L192.2 123.4ZM141.8 117.4L141.8 118.3L141.9 119.7L141.9 121.2L142.0 122.9L142.1 124.5L142.1 126.0L142.1 127.3L142.0 128.7L142.0 130.0L142.0 131.3L141.9 132.3L141.9 133.1L142.2 134.0L142.9 134.7L143.9 134.9L144.9 134.7L145.6 133.9L145.8 132.9L145.7 132.2L145.6 131.1L145.5 129.9L145.4 128.5L145.2 127.1L145.1 125.7L144.9 124.3L144.6 122.7L144.3 121.0L144.0 119.4L143.8 118.1L143.7 117.2L143.5 116.7L143.1 116.4L142.6 116.3L142.2 116.5L141.8 116.9ZM143.5 55.9L143.5 56.1L143.6 56.4L143.9 56.9L144.4 57.2L145.0 57.3L145.5 57.0L145.8 56.5L145.8 55.9L145.8 55.6L145.7 55.3L145.4 54.8L144.9 54.5L144.3 54.5L143.8 54.7L143.5 55.3ZM176.4 96.4L176.9 96.4L177.3 96.4L177.8 96.3L178.1 95.9L178.2 95.4L178.1 95.0L177.8 94.6L177.3 94.5L176.9 94.5L176.4 94.5L176.0 94.6L175.6 95.0L175.5 95.4L175.6 95.9L176.0 96.3ZM108.7 127.6L108.6 128.5L108.3 129.8L108.0 131.4L107.6 133.0L107.3 134.7L107.0 136.3L106.7 137.9L106.3 139.7L106.0 141.5L105.7 143.2L105.4 144.7L105.2 145.7L105.2 146.1L105.5 146.4L105.8 146.6L106.2 146.6L106.6 146.4L106.8 146.0L107.0 145.0L107.4 143.6L107.9 142.0L108.4 140.2L108.9 138.4L109.3 136.9L109.8 135.3L110.2 133.7L110.7 132.1L111.2 130.6L111.6 129.3L111.8 128.4L111.8 127.6L111.4 126.9L110.7 126.5L109.9 126.5L109.1 126.9ZM51.2 138.9L55.8 138.1L60.4 137.4L60.9 137.2L61.3 136.7L61.4 136.2L61.2 135.6L60.7 135.3L60.2 135.2L55.5 135.4L50.8 135.7L50.1 136.0L49.5 136.6L49.4 137.5L49.7 138.2L50.4 138.7ZM52.3 141.6L54.1 141.6L55.9 141.7L56.5 141.6L56.9 141.2L57.1 140.7L57.0 140.1L56.6 139.7L56.1 139.5L54.3 139.2L52.5 139.0L51.9 139.1L51.4 139.6L51.2 140.2L51.3 140.8L51.7 141.3ZM51.9 150.2L52.2 153.4L52.5 156.7L52.7 157.1L53.0 157.4L53.5 157.5L54.0 157.3L54.3 157.0L54.4 156.5L54.1 153.3L53.8 150.1L53.6 149.6L53.3 149.3L52.8 149.2L52.3 149.4L52.0 149.7ZM56.8 155.4L59.7 154.9L62.5 154.5L62.9 154.3L63.2 154.0L63.2 153.6L63.1 153.2L62.7 153.0L62.3 152.9L59.5 153.2L56.6 153.5L56.1 153.7L55.8 154.1L55.8 154.5L56.0 155.0L56.3 155.3ZM48.6 160.3L49.3 164.6L50.1 168.9L50.3 169.3L50.7 169.6L51.2 169.7L51.6 169.4L51.9 169.0L51.9 168.6L51.2 164.3L50.5 160.0L50.3 159.5L49.9 159.3L49.4 159.2L49.0 159.4L48.7 159.8ZM50.2 162.7L51.1 162.7L52.3 162.8L53.7 162.9L55.3 163.0L57.0 163.1L58.7 163.3L60.7 163.5L63.0 163.8L65.3 164.1L67.6 164.4L69.5 164.6L70.9 164.8L71.3 164.7L71.6 164.5L71.8 164.1L71.7 163.7L71.5 163.4L71.1 163.2L69.8 163.0L67.8 162.7L65.6 162.3L63.2 161.9L60.9 161.6L59.0 161.3L57.2 161.1L55.5 160.9L53.9 160.8L52.5 160.6L51.3 160.5L50.4 160.5L49.8 160.6L49.4 160.9L49.2 161.5L49.3 162.1L49.7 162.5ZM66.4 187.5L67.0 187.3L67.9 187.0L68.9 186.6L69.9 186.2L71.0 185.9L72.0 185.6L73.1 185.3L74.3 185.0L75.5 184.7L76.7 184.5L77.7 184.2L78.4 184.1L78.9 183.8L79.2 183.3L79.2 182.8L79.0 182.3L78.5 181.9L77.9 181.9L77.2 182.1L76.2 182.2L75.0 182.5L73.8 182.7L72.5 183.0L71.4 183.3L70.3 183.6L69.2 183.9L68.1 184.3L67.0 184.6L66.2 184.9L65.6 185.1L65.0 185.4L64.8 186.0L64.8 186.7L65.2 187.2L65.8 187.5ZM74.3 196.6L74.3 197.4L74.2 198.5L74.2 200.0L74.3 201.6L74.6 203.2L75.3 204.7L76.4 205.8L77.6 206.7L79.0 207.4L80.4 207.9L81.9 208.2L83.3 208.2L84.6 207.9L85.9 207.3L87.0 206.5L88.0 205.5L88.9 204.4L89.6 203.0L90.3 201.2L90.7 199.1L91.1 196.9L91.4 194.8L91.7 193.0L91.9 191.8L91.8 191.0L91.3 190.3L90.5 190.0L89.7 190.1L89.1 190.6L88.7 191.3L88.5 192.6L88.2 194.4L87.9 196.4L87.6 198.5L87.1 200.3L86.6 201.6L86.1 202.6L85.5 203.4L84.8 204.0L84.2 204.5L83.5 204.8L83.0 204.9L82.3 204.9L81.4 204.7L80.3 204.3L79.4 203.8L78.6 203.2L78.1 202.8L77.9 202.2L77.7 201.2L77.7 199.9L77.7 198.6L77.8 197.4L77.7 196.5L77.5 195.7L76.9 195.0L76.0 194.8L75.1 195.1L74.5 195.7ZM96.9 191.0L96.9 191.8L97.0 192.9L97.1 194.3L97.2 195.8L97.3 197.2L97.6 198.3L97.8 199.2L98.1 200.0L98.4 200.8L99.0 201.5L99.9 202.1L101.1 202.2L102.3 202.0L103.6 201.5L105.0 200.9L106.3 200.2L107.3 199.6L108.1 199.3L108.6 198.8L108.9 198.1L108.7 197.4L108.2 196.8L107.5 196.6L106.8 196.7L106.0 197.1L104.9 197.7L103.7 198.4L102.5 199.0L101.5 199.4L100.9 199.5L100.8 199.5L100.8 199.5L100.7 199.4L100.6 199.0L100.4 198.4L100.2 197.7L100.0 196.8L99.8 195.5L99.7 194.2L99.6 192.8L99.5 191.6L99.4 190.8L99.2 190.1L98.7 189.7L98.0 189.6L97.4 189.8L97.0 190.3ZM126.6 134.3L126.1 138.2L125.5 142.2L125.6 142.6L125.8 142.9L126.2 143.1L126.6 143.0L126.9 142.8L127.1 142.4L127.6 138.5L128.2 134.5L128.2 134.1L127.9 133.8L127.5 133.6L127.1 133.7L126.8 133.9ZM124.9 149.1L124.9 149.7L124.9 150.3L125.0 150.7L125.3 151.0L125.7 151.1L126.1 151.0L126.4 150.7L126.5 150.3L126.5 149.7L126.5 149.1L126.4 148.7L126.1 148.5L125.7 148.4L125.3 148.5L125.0 148.7ZM124.5 158.3L124.5 158.7L124.5 159.1L124.6 159.5L124.9 159.8L125.3 159.9L125.7 159.8L126.0 159.5L126.1 159.1L126.1 158.7L126.1 158.3L126.0 157.9L125.7 157.6L125.3 157.5L124.9 157.6L124.6 157.9ZM126.5 163.8L126.5 164.9L126.6 166.5L126.7 168.4L126.8 170.4L126.9 172.3L127.0 173.8L127.1 175.1L127.2 176.3L127.3 177.4L127.4 178.3L127.5 179.0L127.6 179.6L127.9 180.2L128.4 180.6L129.0 180.7L129.6 180.4L130.0 179.9L130.1 179.3L130.0 178.7L129.9 177.9L129.8 177.0L129.6 176.0L129.4 174.9L129.3 173.6L129.1 172.1L129.0 170.3L128.8 168.3L128.6 166.4L128.5 164.8L128.4 163.6L128.2 163.2L127.8 162.9L127.4 162.8L126.9 162.9L126.6 163.3ZM122.9 169.8L123.2 170.1L123.5 170.4L123.9 170.6L124.4 170.6L124.8 170.4L125.1 170.0L125.1 169.5L124.8 169.0L124.5 168.8L124.2 168.5L123.8 168.2L123.3 168.2L122.9 168.5L122.7 168.9L122.7 169.4ZM123.5 180.9L123.5 181.6L123.5 182.3L123.6 182.8L124.0 183.2L124.6 183.4L125.1 183.2L125.5 182.8L125.7 182.3L125.7 181.6L125.7 180.9L125.5 180.3L125.1 179.9L124.6 179.7L124.0 179.9L123.6 180.3ZM113.3 178.4L113.8 178.7L114.4 179.0L115.2 179.3L116.1 179.7L116.9 180.1L117.6 180.5L118.2 180.8L118.9 181.2L119.6 181.6L120.2 182.0L120.7 182.3L121.1 182.5L121.7 182.7L122.2 182.5L122.7 182.2L122.8 181.6L122.7 181.0L122.3 180.6L121.9 180.4L121.4 180.1L120.8 179.7L120.1 179.2L119.4 178.8L118.7 178.4L118.0 178.0L117.2 177.5L116.3 177.1L115.5 176.7L114.9 176.4L114.4 176.1L113.8 176.0L113.1 176.2L112.7 176.7L112.6 177.4L112.8 178.0ZM126.0 191.1L126.5 191.1L127.3 191.1L128.2 191.1L129.2 191.0L130.3 190.9L131.3 190.7L132.3 190.3L133.3 189.9L134.3 189.4L135.2 188.9L135.9 188.6L136.5 188.3L136.9 187.9L137.1 187.4L137.0 186.8L136.6 186.4L136.1 186.2L135.5 186.3L135.0 186.5L134.2 186.9L133.3 187.3L132.4 187.7L131.5 188.0L130.7 188.2L129.9 188.3L129.1 188.3L128.2 188.3L127.3 188.3L126.5 188.3L126.0 188.3L125.3 188.5L124.7 189.0L124.6 189.7L124.8 190.5L125.3 191.0ZM141.7 128.3L142.6 132.2L143.5 136.1L143.7 136.6L144.2 136.9L144.8 136.9L145.3 136.7L145.6 136.2L145.7 135.7L145.1 131.7L144.5 127.7L144.2 127.1L143.6 126.7L142.9 126.6L142.2 126.9L141.8 127.5ZM126.6 134.3L126.1 137.9L125.6 141.5L125.7 141.9L125.9 142.2L126.3 142.4L126.7 142.3L127.1 142.1L127.2 141.7L127.7 138.1L128.2 134.5L128.2 134.1L127.9 133.8L127.5 133.6L127.1 133.7L126.8 133.9ZM124.8 149.7L124.8 150.1L124.8 150.6L124.9 151.0L125.2 151.3L125.6 151.4L126.0 151.3L126.3 151.0L126.4 150.6L126.4 150.1L126.4 149.7L126.3 149.3L126.0 149.0L125.6 148.9L125.2 149.0L124.9 149.3ZM124.5 158.3L124.5 158.7L124.5 159.1L124.6 159.5L124.9 159.8L125.3 159.9L125.7 159.8L126.0 159.5L126.1 159.1L126.1 158.7L126.1 158.3L126.0 157.9L125.7 157.6L125.3 157.5L124.9 157.6L124.6 157.9ZM126.5 163.8L126.5 164.9L126.6 166.5L126.7 168.4L126.8 170.4L126.9 172.3L127.0 173.8L127.1 175.1L127.2 176.3L127.3 177.4L127.4 178.3L127.5 179.0L127.6 179.6L127.9 180.2L128.4 180.6L129.0 180.7L129.6 180.4L130.0 179.9L130.1 179.3L130.0 178.7L129.9 177.9L129.8 177.0L129.6 176.0L129.4 174.9L129.3 173.6L129.1 172.1L129.0 170.3L128.8 168.3L128.6 166.4L128.5 164.8L128.4 163.6L128.2 163.2L127.8 162.9L127.4 162.8L126.9 162.9L126.6 163.3ZM122.9 169.8L123.2 170.1L123.5 170.4L123.9 170.6L124.4 170.6L124.8 170.4L125.1 170.0L125.1 169.5L124.8 169.0L124.5 168.8L124.2 168.5L123.8 168.2L123.3 168.2L122.9 168.5L122.7 168.9L122.7 169.4ZM123.5 180.9L123.5 181.6L123.5 182.3L123.6 182.8L124.0 183.2L124.6 183.4L125.1 183.2L125.5 182.8L125.7 182.3L125.7 181.6L125.7 180.9L125.5 180.3L125.1 179.9L124.6 179.7L124.0 179.9L123.6 180.3ZM134.3 170.0L134.4 170.1L134.6 170.1L134.9 170.2L135.2 170.1L135.4 169.9L135.5 169.5L135.4 169.2L135.1 169.0L135.0 168.9L134.9 168.9L134.5 168.8L134.2 168.9L134.0 169.1L133.9 169.5L134.0 169.8ZM181.2 133.9L182.0 133.8L183.1 133.7L184.4 133.5L185.9 133.2L187.3 133.0L188.5 132.6L189.6 132.3L190.7 131.8L191.7 131.3L192.5 130.9L193.2 130.5L193.7 130.3L194.2 129.8L194.4 129.2L194.3 128.5L193.8 128.1L193.2 127.9L192.5 128.0L192.0 128.3L191.3 128.7L190.5 129.2L189.6 129.7L188.7 130.1L187.8 130.5L186.7 130.8L185.4 131.1L184.1 131.4L182.8 131.7L181.6 131.9L180.8 132.1L180.4 132.3L180.1 132.7L180.1 133.2L180.3 133.6L180.7 133.9ZM198.6 139.1L197.8 139.5L196.8 140.1L195.5 140.8L194.2 141.6L192.9 142.3L191.8 143.0L190.9 143.5L189.9 144.1L189.0 144.7L188.3 145.1L187.6 145.5L187.1 145.8L186.8 146.1L186.6 146.5L186.7 146.9L187.0 147.2L187.3 147.4L187.7 147.3L188.3 147.1L189.0 146.9L189.9 146.7L190.9 146.4L192.0 146.2L193.0 145.9L194.2 145.6L195.7 145.3L197.1 144.9L198.5 144.6L199.7 144.3L200.6 144.1L201.7 143.3L202.3 142.0L202.1 140.6L201.3 139.4L200.0 138.9ZM202.3 152.8L201.5 152.9L200.5 153.1L199.2 153.2L197.8 153.4L196.4 153.7L195.1 154.0L193.7 154.4L192.3 154.8L191.0 155.3L189.7 155.8L188.7 156.2L187.9 156.5L187.6 156.8L187.4 157.1L187.4 157.5L187.6 157.9L188.0 158.1L188.4 158.0L189.2 157.8L190.3 157.5L191.6 157.2L192.9 156.8L194.3 156.5L195.5 156.3L196.7 156.2L198.1 156.1L199.4 156.1L200.7 156.0L201.8 156.0L202.6 156.0L203.3 155.7L203.9 155.1L204.0 154.3L203.7 153.5L203.1 153.0ZM183.7 170.8L184.1 171.5L184.6 172.5L185.3 173.7L186.0 174.9L186.9 176.1L187.8 177.2L189.0 177.9L190.1 178.4L191.3 178.8L192.2 179.0L193.0 179.2L193.5 179.3L194.5 179.2L195.4 178.6L195.9 177.7L195.8 176.6L195.2 175.7L194.2 175.3L193.6 175.2L192.8 175.1L192.0 175.1L191.2 175.0L190.4 174.8L189.9 174.5L189.2 174.0L188.4 173.2L187.5 172.1L186.7 171.1L186.0 170.2L185.5 169.5L185.1 169.1L184.5 169.0L183.9 169.2L183.6 169.7L183.5 170.2ZM178.0 182.5L178.5 183.0L179.2 183.7L180.1 184.5L181.1 185.4L182.3 186.1L183.5 186.6L184.7 186.8L186.0 186.8L187.2 186.6L188.4 186.3L189.5 185.8L190.7 185.1L191.7 184.2L192.7 183.0L193.6 181.8L194.3 180.6L194.9 179.7L195.3 179.1L195.6 178.1L195.4 177.0L194.7 176.2L193.6 175.9L192.6 176.2L191.8 176.9L191.4 177.6L190.9 178.6L190.3 179.7L189.6 180.8L189.0 181.7L188.5 182.3L187.9 182.7L187.2 183.1L186.4 183.4L185.6 183.6L184.8 183.7L184.2 183.7L183.6 183.5L182.8 183.0L181.9 182.4L181.0 181.7L180.2 181.0L179.7 180.6L179.1 180.3L178.4 180.4L177.9 180.8L177.6 181.4L177.7 182.0ZM167.8 177.4L167.8 178.3L167.9 179.5L168.1 181.0L168.3 182.6L168.6 184.2L169.1 185.7L169.8 186.9L170.6 188.1L171.5 189.2L172.5 190.1L173.4 191.0L174.3 191.9L175.3 192.8L176.4 193.7L177.6 194.6L178.6 195.4L179.5 196.0L180.1 196.4L180.8 196.7L181.7 196.6L182.3 196.1L182.6 195.3L182.4 194.5L181.9 193.8L181.3 193.4L180.4 192.8L179.3 192.1L178.2 191.4L177.2 190.6L176.2 189.8L175.3 189.0L174.4 188.1L173.5 187.3L172.7 186.4L172.0 185.5L171.4 184.6L171.0 183.5L170.7 182.2L170.4 180.7L170.2 179.3L170.1 178.0L170.0 177.1L169.7 176.6L169.3 176.3L168.7 176.2L168.2 176.4L167.8 176.9ZM165.1 195.9L167.9 194.7L170.7 193.5L171.3 193.1L171.5 192.5L171.5 191.8L171.1 191.3L170.5 191.0L169.8 191.1L166.9 192.0L164.0 192.9L163.3 193.4L163.0 194.2L163.1 195.0L163.6 195.7L164.3 196.0ZM149.2 186.0L149.3 187.2L149.4 188.9L149.5 190.9L149.8 193.0L150.0 195.1L150.5 196.9L151.0 198.5L151.7 199.9L152.4 201.2L153.2 202.4L154.0 203.6L154.9 204.7L156.0 205.8L157.3 206.9L158.6 207.9L159.8 208.8L160.8 209.5L161.5 210.0L162.3 210.3L163.1 210.2L163.7 209.6L164.0 208.9L163.9 208.1L163.4 207.4L162.6 206.9L161.6 206.2L160.4 205.4L159.1 204.5L158.0 203.6L157.1 202.7L156.2 201.8L155.4 200.8L154.7 199.8L154.1 198.7L153.5 197.5L153.0 196.2L152.5 194.6L152.2 192.7L151.9 190.6L151.7 188.7L151.5 187.0L151.4 185.7L151.2 185.2L150.7 184.8L150.2 184.8L149.6 185.0L149.3 185.4ZM142.5 203.8L144.3 203.6L146.1 203.4L146.5 203.2L146.7 202.9L146.8 202.5L146.6 202.1L146.3 201.8L145.9 201.8L144.1 202.0L142.3 202.2L142.0 202.4L141.7 202.7L141.6 203.1L141.8 203.5L142.1 203.7ZM167.8 207.2L170.0 206.3L172.1 205.5L172.6 205.1L172.8 204.6L172.7 204.0L172.4 203.6L171.9 203.3L171.3 203.4L169.2 204.3L167.0 205.1L166.6 205.5L166.3 206.0L166.4 206.6L166.7 207.0L167.3 207.2ZM124.3 188.3L124.7 188.7L125.2 189.3L126.0 190.1L127.0 190.9L128.2 191.6L129.7 191.7L131.2 191.2L132.7 190.4L134.1 189.3L135.5 188.3L136.6 187.3L137.4 186.8L137.7 186.3L137.8 185.7L137.6 185.2L137.2 184.8L136.6 184.8L136.1 185.0L135.2 185.5L134.1 186.4L132.7 187.4L131.3 188.3L130.1 188.9L129.4 189.1L129.1 189.1L128.6 188.7L127.9 188.2L127.3 187.5L126.8 186.8L126.3 186.3L125.7 185.9L124.9 185.9L124.3 186.3L123.9 186.9L123.9 187.7ZM126.0 202.6L126.2 203.1L126.5 204.0L126.8 205.0L127.2 206.1L127.7 207.3L128.3 208.2L128.9 209.1L129.5 209.8L130.2 210.6L131.0 211.3L132.0 211.9L133.0 212.5L134.3 213.0L135.7 213.5L137.2 214.0L138.8 214.4L140.4 214.7L142.2 214.9L144.1 214.8L146.3 214.6L148.4 214.2L150.4 213.9L152.1 213.5L153.3 213.3L154.0 213.0L154.4 212.4L154.4 211.7L154.1 211.0L153.5 210.6L152.8 210.5L151.6 210.7L149.9 211.1L147.9 211.5L145.9 211.9L143.9 212.1L142.2 212.2L140.8 212.1L139.3 211.9L137.8 211.6L136.4 211.2L135.2 210.7L134.1 210.3L133.2 209.8L132.4 209.3L131.8 208.8L131.2 208.2L130.7 207.6L130.2 207.0L129.8 206.2L129.3 205.3L129.0 204.3L128.6 203.3L128.4 202.4L128.1 201.8L127.8 201.4L127.3 201.1L126.7 201.1L126.2 201.5L126.0 202.0ZM129.3 204.5L131.2 202.8L133.0 201.2L133.2 200.8L133.3 200.4L133.1 200.1L132.7 199.8L132.3 199.8L132.0 200.0L130.0 201.5L128.1 203.1L127.8 203.5L127.8 204.0L128.0 204.4L128.4 204.7L128.9 204.7ZM150.1 185.5L150.1 186.5L150.1 187.9L150.1 189.6L150.1 191.4L150.2 193.2L150.3 194.7L150.4 196.1L150.5 197.5L150.6 198.8L150.9 200.2L151.3 201.6L151.9 202.9L152.8 204.2L154.0 205.4L155.2 206.5L156.5 207.4L157.7 208.3L158.7 209.0L159.8 209.6L160.9 209.9L161.8 210.1L162.6 210.3L163.2 210.3L163.6 210.4L164.5 210.3L165.2 209.8L165.6 208.9L165.5 208.0L164.9 207.3L164.1 206.9L163.6 206.9L163.0 206.8L162.3 206.8L161.7 206.7L161.0 206.5L160.3 206.2L159.3 205.6L158.2 204.9L157.0 204.1L155.9 203.3L154.9 202.4L154.2 201.5L153.7 200.6L153.3 199.6L153.0 198.5L152.9 197.2L152.7 195.9L152.5 194.5L152.3 193.0L152.1 191.3L152.0 189.5L151.8 187.8L151.7 186.4L151.7 185.4L151.5 185.0L151.2 184.7L150.8 184.6L150.4 184.8L150.2 185.1ZM143.4 203.4L145.0 203.1L146.6 202.8L147.0 202.7L147.2 202.4L147.2 202.1L147.1 201.8L146.8 201.6L146.4 201.5L144.8 201.8L143.2 202.1L142.9 202.2L142.7 202.5L142.6 202.8L142.8 203.2L143.1 203.3ZM91.7 212.2L92.8 212.6L93.9 213.1L94.2 213.1L94.5 213.0L94.7 212.7L94.8 212.4L94.6 212.1L94.4 211.8L93.3 211.4L92.2 211.0L91.9 210.9L91.5 211.1L91.3 211.3L91.3 211.7L91.4 212.0ZM89.1 190.7L88.9 191.4L88.8 192.4L88.6 193.6L88.4 194.9L88.2 196.3L87.9 197.6L87.7 199.1L87.3 200.7L87.0 202.4L86.7 203.9L86.4 205.3L86.2 206.2L86.3 207.0L86.7 207.6L87.4 207.9L88.1 207.9L88.7 207.4L89.0 206.8L89.2 205.8L89.4 204.5L89.7 202.9L90.0 201.2L90.3 199.6L90.6 198.1L90.8 196.7L91.0 195.3L91.2 194.0L91.3 192.8L91.5 191.8L91.6 191.0L91.5 190.4L91.1 189.8L90.5 189.6L89.9 189.7L89.3 190.0ZM99.4 202.3L103.2 200.2L107.0 198.1L107.4 197.8L107.5 197.3L107.4 196.9L107.0 196.5L106.5 196.4L106.1 196.5L102.3 198.7L98.6 201.0L98.3 201.3L98.2 201.6L98.3 202.0L98.6 202.3L99.0 202.4ZM111.4 191.4L114.6 191.4L118.4 194.6L121.7 198.4L125.5 198.4L126.0 201.6L123.3 206.5L120.6 210.3L117.4 215.2L113.6 216.2L112.5 213.0L110.3 213.0L109.2 217.3L103.3 217.3L101.1 210.3L106.0 207.6L110.9 204.4L114.1 200.6L113.0 198.9L109.2 198.9L107.6 196.2L110.3 194.6ZM125.5 208.7L127.6 212.5L125.5 215.9L123.3 212.5Z"/><clipPath id="ci"><use href="#pi"/></clipPath></defs><rect x="0" y="0" width="252" height="250" fill="#000"/><rect x="255" y="0" width="252" height="250" fill="#000"/><rect x="0" y="253" width="252" height="250" fill="#000"/><rect x="255" y="253" width="252" height="250" fill="#000"/><filter id="b1" x="-10%" y="-10%" width="120%" height="120%"><feGaussianBlur stdDeviation="0.9"/></filter><filter id="b2" x="-30%" y="-30%" width="160%" height="160%"><feGaussianBlur stdDeviation="5"/></filter><filter id="b4" x="-10%" y="-10%" width="120%" height="120%"><feGaussianBlur stdDeviation="1.4"/></filter><filter id="b3" x="-30%" y="-30%" width="160%" height="160%"><feGaussianBlur stdDeviation="2"/></filter><clipPath id="cp"><rect x="0" y="0" width="252" height="250"/></clipPath><clipPath id="cl"><use href="#pl"/></clipPath><g clip-path="url(#cp)"><g filter="url(#b1)"><use href="#po" fill="#343434"/><use href="#po" fill="none" stroke="#000" stroke-width="1.5"/><path d="M126.0 28.1L128.8 28.1L131.5 28.2L134.0 28.4L136.4 28.6L138.6 28.8L140.7 29.0L142.5 29.2L143.9 29.3L145.2 29.5L146.4 29.7L147.6 30.0L148.8 30.3L150.2 30.7L151.6 31.1L153.0 31.6L154.4 32.1L155.7 32.6L157.0 33.1L158.2 33.6L159.4 34.1L160.5 34.5L161.6 35.0L162.6 35.5L163.5 36.0L164.4 36.6L165.3 37.1L166.2 37.8L167.1 38.4L168.0 39.1L169.0 39.9L170.0 40.5L171.0 41.2L171.9 41.8L172.8 42.5L173.7 43.1L174.5 43.7L175.2 44.4L175.9 45.0L176.7 45.7L177.4 46.5L178.1 47.2L178.8 48.0L179.5 48.8L180.2 49.6L180.9 50.4L181.6 51.2L182.3 52.1L182.9 52.9L183.6 53.8L184.2 54.7L184.9 55.6L185.5 56.5L186.1 57.5L186.7 58.4L187.3 59.4L187.8 60.4L188.3 61.5L188.9 62.7L189.4 63.8L190.0 65.0L190.6 66.2L191.1 67.3L191.7 68.4L192.2 69.6L192.7 70.9L193.3 72.2L193.9 73.8L194.5 75.5L195.2 77.3L195.8 79.1L196.5 81.0L197.1 82.7L197.7 84.2L198.3 85.7L198.9 87.1L199.4 88.5L200.0 89.8L200.5 91.1L201.0 92.5L201.4 93.9L201.9 95.3L202.3 96.7L202.8 98.2L203.2 99.6L203.7 101.1L204.2 102.6L204.8 104.1L205.2 105.6L205.7 107.0L206.2 108.3L206.6 109.4L207.0 110.4L207.3 111.2L207.6 112.0L207.9 112.9L208.2 113.9L208.6 115.1L209.0 116.5L209.4 117.9L209.8 119.4L210.1 120.8L210.5 122.3L210.8 123.6L211.0 125.0L211.3 126.4L211.5 127.7L211.7 129.1L211.9 130.5L212.1 131.9L212.2 133.3L212.4 134.7L212.5 136.1L212.6 137.5L212.7 139.0L212.8 140.3L213.0 141.6L213.1 142.9L213.2 144.2L213.3 145.6L213.3 147.3L213.3 149.5L213.3 152.0L213.3 154.6L213.2 157.2L213.1 159.5L212.9 161.3L212.7 162.5L212.5 163.1L212.2 163.6L211.8 164.3L211.3 165.1L210.8 166.2L210.3 167.5L209.8 168.9L209.3 170.3L208.8 171.7L208.3 173.1L207.9 174.4L207.4 175.7L207.0 176.9L206.7 178.1L206.3 179.2L205.9 180.3L205.6 181.3L205.2 182.2L204.9 183.0L204.6 183.8L204.3 184.6L203.9 185.6L203.4 186.8L202.7 188.3L201.9 190.1L201.0 192.0L200.2 193.9L199.3 195.6L198.5 197.0L197.7 198.1L196.9 199.0L196.0 199.9L195.1 200.8L194.1 201.8L193.1 202.9L192.1 204.0L191.1 205.2L190.0 206.4L189.1 207.6L188.1 208.8L187.2 209.9L186.4 211.1L185.8 212.1L185.3 213.0L184.9 213.7L184.4 214.4L183.6 215.2L182.5 216.0L181.1 217.0L179.4 218.1L177.7 219.2L176.0 220.2L174.4 221.1L173.0 222.0L171.7 222.8L170.5 223.5L169.2 224.3L168.0 224.9L166.7 225.6L165.3 226.3L163.8 227.0L162.3 227.6L160.8 228.3L159.2 228.9L157.7 229.5L156.3 230.1L154.8 230.7L153.4 231.3L152.0 231.9L150.6 232.4L149.2 232.9L148.0 233.4L146.9 233.8L146.0 234.2L145.1 234.5L144.0 234.8L142.5 235.0L140.6 235.2L138.4 235.4L135.9 235.6L133.3 235.7L130.7 235.7L128.1 235.7L125.3 235.6L122.3 235.4L119.2 235.2L116.2 234.9L113.5 234.6L111.3 234.4L109.8 234.2L108.9 234.1L108.3 233.9L107.7 233.8L106.9 233.6L105.9 233.4L104.6 233.1L103.2 232.9L101.7 232.6L100.3 232.3L98.8 232.0L97.5 231.7L96.1 231.3L94.7 230.9L93.4 230.5L92.0 230.0L90.6 229.5L89.2 228.9L87.9 228.4L86.5 227.7L85.1 227.1L83.8 226.4L82.3 225.7L80.9 225.0L79.5 224.3L78.1 223.7L76.7 223.0L75.4 222.3L74.1 221.6L72.8 220.7L71.4 219.6L70.0 218.4L68.6 217.0L67.2 215.6L65.8 214.2L64.5 212.7L63.3 211.1L62.0 209.4L60.8 207.6L59.6 205.9L58.6 204.2L57.6 202.8L56.9 201.6L56.3 200.6L55.8 199.8L55.3 199.0L54.8 198.2L54.3 197.2L53.8 196.2L53.2 195.2L52.6 194.2L52.1 193.2L51.5 192.1L51.0 191.0L50.4 189.9L49.9 188.9L49.3 187.8L48.8 186.6L48.2 185.5L47.6 184.2L46.9 182.9L46.2 181.7L45.5 180.4L44.8 179.1L44.2 177.9L43.7 176.6L43.3 175.2L42.9 173.9L42.6 172.5L42.2 171.0L41.9 169.3L41.5 167.3L41.1 165.2L40.7 163.0L40.3 160.6L39.9 158.2L39.6 155.6L39.4 152.8L39.3 149.9L39.2 146.7L39.3 143.4L39.4 140.0L39.6 136.7L40.0 133.4L40.5 130.2L41.1 126.9L41.8 123.7L42.7 120.4L43.6 117.1L44.5 113.8L45.5 110.6L46.5 107.3L47.6 104.0L48.8 100.7L50.0 97.3L51.1 94.0L52.3 90.6L53.6 87.1L54.8 83.6L56.0 80.1L57.2 76.9L58.2 74.0L59.1 71.3L59.9 68.9L60.6 66.7L61.2 64.7L61.8 63.0L62.5 61.4L63.2 60.0L64.0 58.9L64.8 57.8L65.6 56.8L66.5 55.8L67.3 54.7L67.9 53.8L68.3 53.0L68.6 52.5L68.8 52.0L69.2 51.5L69.9 50.6L70.9 49.5L72.2 48.1L73.6 46.6L75.1 45.1L76.6 43.6L78.0 42.4L79.3 41.2L80.7 40.2L82.0 39.2L83.4 38.2L84.8 37.3L86.2 36.4L87.6 35.6L88.8 34.7L90.1 34.0L91.3 33.3L92.6 32.7L94.1 32.1L95.8 31.6L97.5 31.1L99.4 30.7L101.5 30.3L103.8 29.9L106.4 29.6L109.3 29.2L112.6 28.9L116.1 28.6L119.6 28.4L123.0 28.2Z" fill="none" stroke="#4a4a4a" stroke-width="3.6"/><use href="#pm" fill="#060606"/><path d="M48.1 157.2L48.5 159.1L48.8 160.8L49.2 162.5L49.5 164.1L49.8 165.6L50.0 166.7L50.2 167.7L50.4 168.7L50.7 169.7L51.0 170.8L51.3 172.0L51.6 173.3L52.0 174.6L52.4 175.9L52.8 177.2L53.2 178.5L53.6 179.9L54.0 181.2L54.5 182.5L54.9 183.8L55.4 185.0L55.9 186.2L56.3 187.3L56.8 188.3L57.3 189.3L57.9 190.4L58.5 191.4L59.0 192.5L59.7 193.7L60.4 194.9L61.1 196.1L61.7 197.3L62.4 198.3L62.9 199.3L63.4 200.0L63.7 200.5L64.0 200.9L64.2 201.3L64.5 201.7L64.9 202.2L65.4 202.8L66.0 203.5L66.6 204.2L67.3 204.9L68.0 205.7L68.7 206.5L69.5 207.2L70.3 208.0L71.0 208.8L71.8 209.5L72.7 210.2L73.6 211.0L74.8 211.7L76.0 212.5L77.4 213.4L78.8 214.2L80.2 215.0L81.6 215.7L82.9 216.3L84.2 216.8L85.5 217.3L86.9 217.9L88.3 218.4L89.8 218.9L91.1 219.5L92.3 220.0L93.5 220.5L94.5 220.9L95.6 221.3L96.8 221.7L98.1 222.0L99.7 222.3L101.3 222.6L103.0 222.8L104.5 223.0L105.8 223.2L106.7 223.3L107.3 223.3L108.0 223.3L109.0 223.3L110.3 223.5L112.0 223.8L114.2 224.3L116.7 225.1L119.4 225.8L122.1 226.6L124.6 227.2L126.7 227.7L128.4 227.8L130.0 227.9L131.5 227.9L132.9 227.8L134.2 227.7L135.5 227.5L136.5 227.4L137.2 227.3L137.8 227.1L138.4 226.9L139.3 226.6L140.4 226.3L141.6 225.9L143.0 225.5L144.4 225.0L145.8 224.6L147.3 224.1L148.6 223.5L149.9 223.0L151.3 222.4L152.6 221.7L154.1 221.0L155.5 220.3L157.0 219.6L158.6 218.9L160.2 218.2L161.8 217.5L163.3 216.8L164.8 216.2L166.2 215.6L167.4 215.0L168.6 214.5L169.6 214.1L170.6 213.6L171.5 213.2L172.5 212.7L173.3 212.2L174.2 211.8L174.9 211.4L175.7 210.9L176.3 210.5L177.1 209.9L177.8 209.3L178.6 208.5L179.5 207.6L180.4 206.7L181.3 205.6L182.3 204.6L183.4 203.5L184.5 202.4L185.5 201.2L186.6 200.1L187.6 199.0L188.5 198.0L189.3 197.0L190.0 196.1L190.7 195.3L191.4 194.4L192.0 193.4L192.8 192.4L193.6 191.4L194.4 190.3L195.1 189.2L195.9 188.2L196.5 187.2L197.0 186.3L197.3 185.4L197.7 184.5L198.0 183.5L198.3 182.3L198.6 181.1L199.0 179.8L199.4 178.5L199.8 177.3L200.2 176.1L200.6 175.0L200.9 173.8L201.2 172.6L201.5 171.3L201.8 170.0L202.1 168.6L202.4 167.2L202.6 165.8L202.9 164.4L203.1 163.0L203.3 161.7L203.5 160.3L203.6 159.0L203.8 157.6" fill="none" stroke="#4c4c4c" stroke-width="3.5"/><use href="#pi" fill="#a6a6a6"/><use href="#ptm" fill="#5c5c5c"/><g clip-path="url(#ci)"><g filter="url(#b2)"><ellipse cx="90" cy="125" rx="20" ry="48" fill="#3a3a3a"/><ellipse cx="163" cy="122" rx="22" ry="52" fill="#3a3a3a"/></g><g filter="url(#b3)"><path d="M126 45V215" stroke="#686868" stroke-width="14" fill="none"/><path d="M110 95Q104 130 102 165M143 95Q148 130 148 160" stroke="#969696" stroke-width="5" fill="none" stroke-linecap="round"/></g><path d="M126.0 40.6Q125.9 45.4 127.6 49.8M142.8 40.6Q145.9 46.3 147.6 52.5M152.2 41.8Q156.2 47.4 154.7 54.1M160.4 44.8Q160.7 49.8 156.5 52.5M166.7 49.7Q163.4 57.0 156.6 61.4M172.4 57.7Q165.8 60.8 163.1 67.6M175.9 63.7Q169.5 63.0 165.1 67.7M178.7 70.4Q175.0 77.4 169.3 83.0M181.8 75.9Q179.5 79.9 175.5 82.4M186.0 84.7Q181.1 84.8 176.4 85.9M189.5 93.8Q183.9 94.7 178.4 96.1M192.8 102.5Q191.0 106.7 186.7 108.4M195.5 112.2Q189.7 113.7 183.7 112.9M198.0 123.4Q192.2 125.6 186.1 125.3M199.8 133.0Q192.5 132.8 185.9 129.6M200.1 143.1Q193.7 140.9 187.4 143.2M201.1 153.6Q196.4 149.9 190.7 151.8M200.4 163.6Q194.3 163.2 188.8 165.9M198.6 170.2Q192.1 172.3 186.2 168.9M194.7 176.9Q188.7 172.4 182.2 168.8M192.6 183.8Q188.9 179.6 183.9 177.3M188.7 190.4Q184.1 185.7 179.9 180.6M182.2 197.1Q178.3 189.8 174.7 182.4M176.0 203.6Q174.8 199.3 171.5 196.3M168.2 208.1Q167.8 199.5 163.6 191.8M157.9 212.0Q155.8 206.6 152.0 202.3M146.7 216.2Q140.7 213.9 137.3 208.4M138.7 219.4Q137.9 214.9 134.4 212.0M130.2 217.5Q128.7 212.6 128.5 207.4M112.8 218.3Q113.6 214.0 114.9 209.8M105.7 218.2Q109.8 211.1 110.2 202.9M95.9 214.9Q99.1 210.8 103.1 207.3M85.9 210.2Q90.9 203.4 90.6 195.0M76.0 205.3Q75.2 200.3 77.6 195.9M69.2 200.4Q72.7 195.3 75.3 189.7M63.0 193.8Q65.0 190.3 67.8 187.4M57.5 185.9Q64.3 183.6 67.4 177.3M53.0 178.1Q59.3 177.9 65.5 176.3M50.7 169.3Q55.2 171.1 59.2 168.3M48.7 159.7Q56.1 163.0 64.3 162.7M50.5 140.2Q56.4 138.1 62.0 140.8M75.6 58.9Q80.5 59.9 81.9 64.7M81.3 51.9Q86.0 53.0 89.9 55.9M87.9 46.2Q92.4 46.4 94.9 50.2M94.2 41.6Q100.2 43.7 102.1 49.7M106.0 40.6Q105.6 47.7 101.3 53.3" fill="none" stroke="#8e8e8e" stroke-width="1.5" stroke-linecap="round"/><use href="#ps" fill="#8a8a8a" filter="url(#b4)"/><use href="#ps2" fill="#b0b0b0" filter="url(#b1)"/><use href="#pl" fill="#9a9a9a"/><g clip-path="url(#cl)"><rect x="71" y="83.5" width="18" height="9.5" rx="2" fill="#7c7c7c" filter="url(#b1)"/><rect x="64.5" y="98" width="23.5" height="15.5" rx="4" fill="#7a7a7a" filter="url(#b1)"/><use href="#pl" fill="none" stroke="#b2b2b2" stroke-width="9" filter="url(#b1)"/></g><path d="M126 60V215" stroke="#808080" stroke-width="1.2" fill="none"/><path d="M121 38L126 50L131 38Z" fill="#181818"/><ellipse cx="126" cy="212.5" rx="2.6" ry="4.2" fill="#111"/></g></g></g><g transform="translate(255,0)" shape-rendering="crispEdges"><use href="#po" fill="#fbaa82"/><use href="#pm" fill="#00ff00"/><use href="#pi" fill="#2a00ff"/><use href="#pt" fill="#cd6960"/><g clip-path="url(#ci)"><use href="#ps" fill="#2a00ff"/></g><use href="#pl" fill="#efef30"/><path d="M119.5 38L126 48L132.5 38Z" fill="#00ff00"/></g><g transform="translate(0,253)" shape-rendering="crispEdges"><use href="#pk" fill="#fff"/><path d="M120.5 220L123 215.8L124.8 215L124 212.6L124.4 209.6L126 206.8L127.6 210L127.6 213L126.6 215.4L129 216.2L131.5 220Z" fill="#000"/><rect x="125" y="40.5" width="3" height="2" fill="#000"/></g><g transform="translate(255,253)" shape-rendering="crispEdges"><use href="#pl" fill="#fff"/><path d="M68.2 70.8L71.5 70.8L78.3 72.8L79.0 74.9L74.2 75.5L81.0 76.9L75.6 87.0L64.8 87.0L64.8 81.6L65.5 77.6Z" fill="#fff"/></g></svg>
</body></html>
